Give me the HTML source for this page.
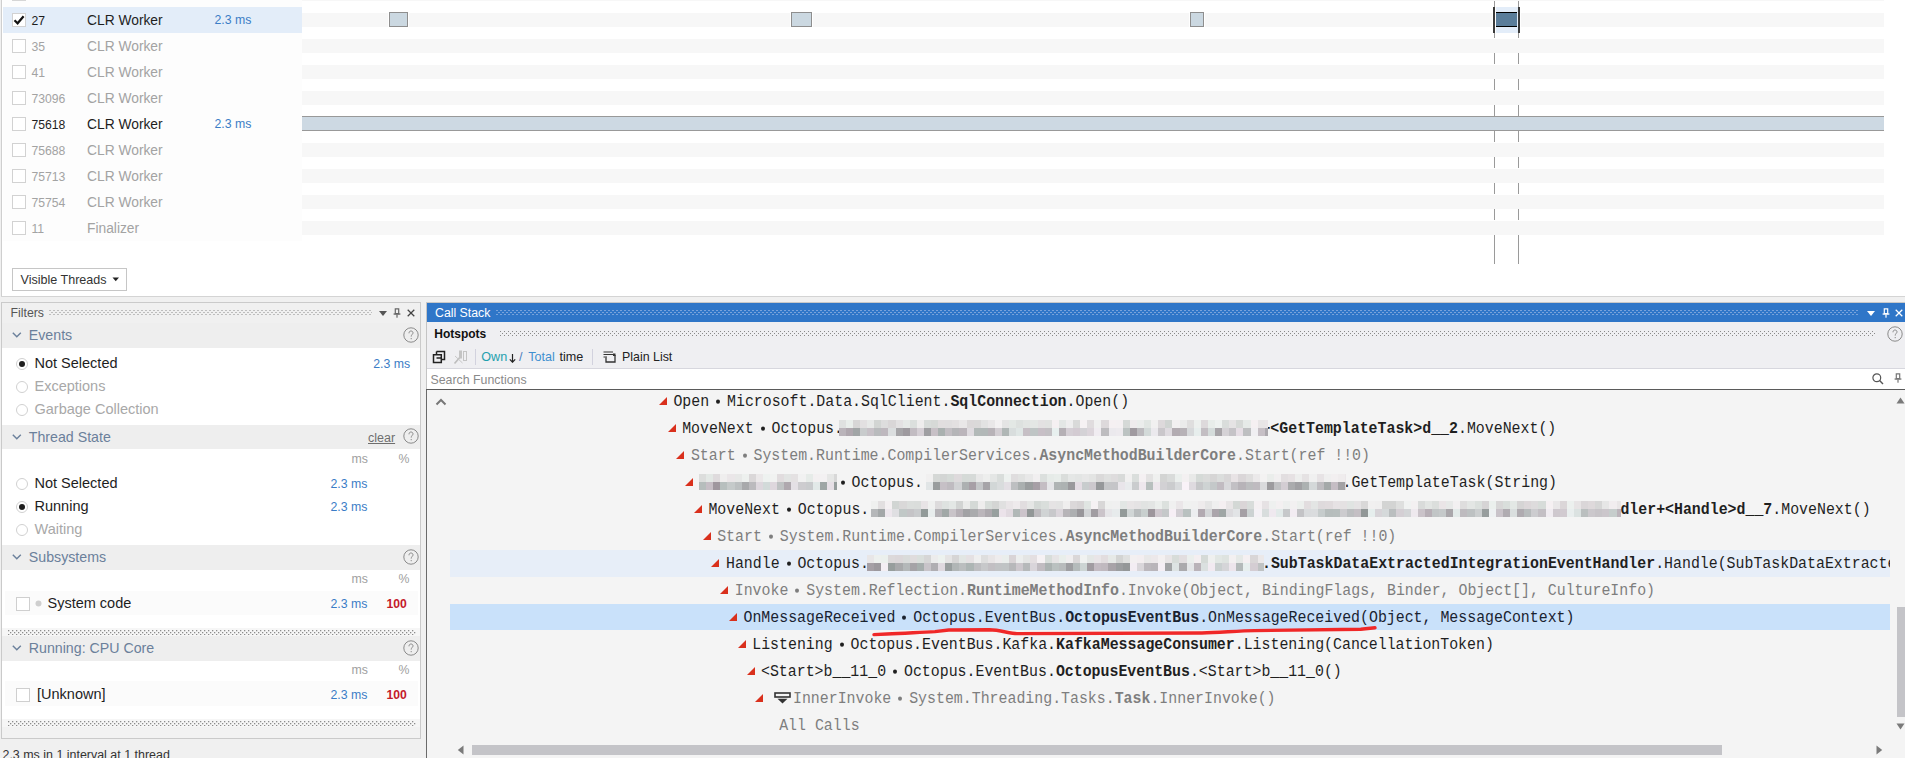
<!DOCTYPE html><html><head><meta charset="utf-8"><style>
html,body{margin:0;padding:0;width:1905px;height:758px;overflow:hidden;position:relative}
body div,body svg{position:absolute}
.t{line-height:0;white-space:pre}
</style></head><body><div style="left:0px;top:0px;width:1905px;height:758px;background:#f0f0f0;"></div>
<div style="left:1px;top:0px;width:1904px;height:296px;background:#ffffff;"></div>
<div style="left:1px;top:0px;width:1px;height:296px;background:#cfcfcf;"></div>
<div style="left:1px;top:296px;width:1904px;height:1px;background:#d4d4d4;"></div>
<div style="left:3px;top:0px;width:299px;height:241px;background:#fdfdfd;"></div>
<div style="left:3px;top:7px;width:299px;height:26px;background:#e3edf9;"></div>
<div style="left:302px;top:-13px;width:1582px;height:14px;background:#f7f7f7;"></div>
<div style="left:302px;top:13px;width:1582px;height:14px;background:#f7f7f7;"></div>
<div style="left:302px;top:39px;width:1582px;height:14px;background:#f7f7f7;"></div>
<div style="left:302px;top:65px;width:1582px;height:14px;background:#f7f7f7;"></div>
<div style="left:302px;top:91px;width:1582px;height:14px;background:#f7f7f7;"></div>
<div style="left:302px;top:117px;width:1582px;height:14px;background:#f7f7f7;"></div>
<div style="left:302px;top:143px;width:1582px;height:14px;background:#f7f7f7;"></div>
<div style="left:302px;top:169px;width:1582px;height:14px;background:#f7f7f7;"></div>
<div style="left:302px;top:195px;width:1582px;height:14px;background:#f7f7f7;"></div>
<div style="left:302px;top:221px;width:1582px;height:14px;background:#f7f7f7;"></div>
<div style="left:12px;top:-13px;width:14px;height:14px;background:#fff;border:1px solid #d6d6d6;box-sizing:border-box"></div>
<div style="left:12px;top:13px;width:14px;height:14px;background:#fff;border:1px solid #d2d2d2;box-sizing:border-box"></div>
<svg style="position:absolute;left:12px;top:13px" width="14" height="14"><path d="M2.5 7.2 L5.6 10.3 L11.6 3.2" fill="none" stroke="#111" stroke-width="2.2"/></svg>
<div class="t" style="left:31.5px;top:20.77px;font-family:'Liberation Sans', sans-serif;font-size:12.2px;color:#1e1e1e;font-weight:400;">27</div>
<div class="t" style="left:87px;top:21.02px;font-family:'Liberation Sans', sans-serif;font-size:13.8px;color:#1e1e1e;font-weight:400;">CLR Worker</div>
<div class="t" style="left:214.5px;top:20.14px;font-family:'Liberation Sans', sans-serif;font-size:12.3px;color:#3b7dc6;font-weight:400;">2.3 ms</div>
<div style="left:12px;top:39px;width:14px;height:14px;background:#fff;border:1px solid #d2d2d2;box-sizing:border-box"></div>
<div class="t" style="left:31.5px;top:46.77px;font-family:'Liberation Sans', sans-serif;font-size:12.2px;color:#a3a3a3;font-weight:400;">35</div>
<div class="t" style="left:87px;top:47.02px;font-family:'Liberation Sans', sans-serif;font-size:13.8px;color:#a3a3a3;font-weight:400;">CLR Worker</div>
<div style="left:12px;top:65px;width:14px;height:14px;background:#fff;border:1px solid #d2d2d2;box-sizing:border-box"></div>
<div class="t" style="left:31.5px;top:72.77px;font-family:'Liberation Sans', sans-serif;font-size:12.2px;color:#a3a3a3;font-weight:400;">41</div>
<div class="t" style="left:87px;top:73.02px;font-family:'Liberation Sans', sans-serif;font-size:13.8px;color:#a3a3a3;font-weight:400;">CLR Worker</div>
<div style="left:12px;top:91px;width:14px;height:14px;background:#fff;border:1px solid #d2d2d2;box-sizing:border-box"></div>
<div class="t" style="left:31.5px;top:98.77px;font-family:'Liberation Sans', sans-serif;font-size:12.2px;color:#a3a3a3;font-weight:400;">73096</div>
<div class="t" style="left:87px;top:99.02px;font-family:'Liberation Sans', sans-serif;font-size:13.8px;color:#a3a3a3;font-weight:400;">CLR Worker</div>
<div style="left:12px;top:117px;width:14px;height:14px;background:#fff;border:1px solid #d2d2d2;box-sizing:border-box"></div>
<div class="t" style="left:31.5px;top:124.77px;font-family:'Liberation Sans', sans-serif;font-size:12.2px;color:#1e1e1e;font-weight:400;">75618</div>
<div class="t" style="left:87px;top:125.02px;font-family:'Liberation Sans', sans-serif;font-size:13.8px;color:#1e1e1e;font-weight:400;">CLR Worker</div>
<div class="t" style="left:214.5px;top:124.14px;font-family:'Liberation Sans', sans-serif;font-size:12.3px;color:#3b7dc6;font-weight:400;">2.3 ms</div>
<div style="left:12px;top:143px;width:14px;height:14px;background:#fff;border:1px solid #d2d2d2;box-sizing:border-box"></div>
<div class="t" style="left:31.5px;top:150.77px;font-family:'Liberation Sans', sans-serif;font-size:12.2px;color:#a3a3a3;font-weight:400;">75688</div>
<div class="t" style="left:87px;top:151.02px;font-family:'Liberation Sans', sans-serif;font-size:13.8px;color:#a3a3a3;font-weight:400;">CLR Worker</div>
<div style="left:12px;top:169px;width:14px;height:14px;background:#fff;border:1px solid #d2d2d2;box-sizing:border-box"></div>
<div class="t" style="left:31.5px;top:176.77px;font-family:'Liberation Sans', sans-serif;font-size:12.2px;color:#a3a3a3;font-weight:400;">75713</div>
<div class="t" style="left:87px;top:177.02px;font-family:'Liberation Sans', sans-serif;font-size:13.8px;color:#a3a3a3;font-weight:400;">CLR Worker</div>
<div style="left:12px;top:195px;width:14px;height:14px;background:#fff;border:1px solid #d2d2d2;box-sizing:border-box"></div>
<div class="t" style="left:31.5px;top:202.77px;font-family:'Liberation Sans', sans-serif;font-size:12.2px;color:#a3a3a3;font-weight:400;">75754</div>
<div class="t" style="left:87px;top:203.02px;font-family:'Liberation Sans', sans-serif;font-size:13.8px;color:#a3a3a3;font-weight:400;">CLR Worker</div>
<div style="left:12px;top:221px;width:14px;height:14px;background:#fff;border:1px solid #d2d2d2;box-sizing:border-box"></div>
<div class="t" style="left:31.5px;top:228.77px;font-family:'Liberation Sans', sans-serif;font-size:12.2px;color:#a3a3a3;font-weight:400;">11</div>
<div class="t" style="left:87px;top:229.02px;font-family:'Liberation Sans', sans-serif;font-size:13.8px;color:#a3a3a3;font-weight:400;">Finalizer</div>
<div style="left:388px;top:12px;width:21px;height:15px;background:#ffffff;"></div>
<div style="left:389px;top:12px;width:19px;height:15px;background:#cbd8e1;border:1px solid #8e8e8e;box-sizing:border-box"></div>
<div style="left:790px;top:12px;width:23px;height:15px;background:#ffffff;"></div>
<div style="left:791px;top:12px;width:21px;height:15px;background:#cbd8e1;border:1px solid #8e8e8e;box-sizing:border-box"></div>
<div style="left:1189px;top:12px;width:16px;height:15px;background:#ffffff;"></div>
<div style="left:1190px;top:12px;width:14px;height:15px;background:#cbd8e1;border:1px solid #8e8e8e;box-sizing:border-box"></div>
<div style="left:1492px;top:12px;width:29px;height:16px;background:#ffffff;"></div>
<div style="left:1496px;top:7px;width:22px;height:26px;background:#e3edf9;"></div>
<div style="left:1496px;top:12px;width:21px;height:15px;background:#5a7d9a;border-top:1px solid #000;border-bottom:1px solid #000;box-sizing:border-box"></div>
<div style="left:1493px;top:7px;width:2px;height:26px;background:#3a3a3a;"></div>
<div style="left:1518px;top:7px;width:2px;height:26px;background:#3a3a3a;"></div>
<div style="left:302px;top:116px;width:1582px;height:15px;background:#cdd9e3;border-top:1px solid #999;border-bottom:1px solid #999;box-sizing:border-box"></div>
<div style="left:1494px;top:1px;width:1px;height:6px;background:#9a9a9a;"></div>
<div style="left:1494px;top:33px;width:1px;height:5px;background:#9a9a9a;"></div>
<div style="left:1494px;top:53px;width:1px;height:11px;background:#9a9a9a;"></div>
<div style="left:1494px;top:79px;width:1px;height:11px;background:#9a9a9a;"></div>
<div style="left:1494px;top:105px;width:1px;height:11px;background:#9a9a9a;"></div>
<div style="left:1494px;top:131px;width:1px;height:11px;background:#9a9a9a;"></div>
<div style="left:1494px;top:157px;width:1px;height:11px;background:#9a9a9a;"></div>
<div style="left:1494px;top:183px;width:1px;height:11px;background:#9a9a9a;"></div>
<div style="left:1494px;top:209px;width:1px;height:11px;background:#9a9a9a;"></div>
<div style="left:1494px;top:235px;width:1px;height:29px;background:#9a9a9a;"></div>
<div style="left:1518px;top:1px;width:1px;height:6px;background:#9a9a9a;"></div>
<div style="left:1518px;top:33px;width:1px;height:5px;background:#9a9a9a;"></div>
<div style="left:1518px;top:53px;width:1px;height:11px;background:#9a9a9a;"></div>
<div style="left:1518px;top:79px;width:1px;height:11px;background:#9a9a9a;"></div>
<div style="left:1518px;top:105px;width:1px;height:11px;background:#9a9a9a;"></div>
<div style="left:1518px;top:131px;width:1px;height:11px;background:#9a9a9a;"></div>
<div style="left:1518px;top:157px;width:1px;height:11px;background:#9a9a9a;"></div>
<div style="left:1518px;top:183px;width:1px;height:11px;background:#9a9a9a;"></div>
<div style="left:1518px;top:209px;width:1px;height:11px;background:#9a9a9a;"></div>
<div style="left:1518px;top:235px;width:1px;height:29px;background:#9a9a9a;"></div>
<div style="left:12px;top:268px;width:115px;height:23px;background:#ffffff;border:1px solid #c6c6c6;box-sizing:border-box"></div>
<div class="t" style="left:20.5px;top:279.65px;font-family:'Liberation Sans', sans-serif;font-size:12.55px;color:#333;font-weight:400;">Visible Threads</div>
<svg style="position:absolute;left:112px;top:277px" width="8" height="5"><path d="M0.5 0.5 L7 0.5 L3.75 4.2 Z" fill="#222"/></svg>
<div style="left:1px;top:302px;width:420px;height:437px;background:#ffffff;border:1px solid #cacaca;box-sizing:border-box"></div>
<div style="left:2px;top:303px;width:418px;height:20px;background:#f0f0f0;"></div>
<div class="t" style="left:10.5px;top:312.54px;font-family:'Liberation Sans', sans-serif;font-size:12.3px;color:#555;font-weight:400;">Filters</div>
<svg style="position:absolute;left:49px;top:310px" width="323" height="5"><defs><pattern id="p1" width="4" height="4" patternUnits="userSpaceOnUse"><rect x="0" y="0" width="2" height="1" fill="#bdbdbd"/><rect x="2" y="2" width="2" height="1" fill="#bdbdbd"/></pattern></defs><rect width="323" height="5" fill="url(#p1)"/></svg>
<svg style="position:absolute;left:379px;top:311px" width="8" height="5"><path d="M0 0 L8 0 L4.0 5 Z" fill="#555"/></svg>
<svg style="position:absolute;left:393px;top:308px" width="8" height="10"><path d="M2.3 0.8 H5.7 V5.6 H2.3 Z" fill="none" stroke="#666" stroke-width="1.2"/><rect x="0.6" y="5.4" width="6.8" height="1.3" fill="#666"/><rect x="3.4" y="6.5" width="1.2" height="3.2" fill="#666"/></svg>
<svg style="position:absolute;left:407px;top:309px" width="8" height="8"><path d="M0.7 0.7 L7.3 7.3 M7.3 0.7 L0.7 7.3" stroke="#444" stroke-width="1.25"/></svg>
<div style="left:2px;top:323px;width:418px;height:25px;background:#eeeeee;"></div>
<svg style="position:absolute;left:12px;top:332px" width="10" height="6"><path d="M0.8 0.8 L4.8 4.8 L8.8 0.8" fill="none" stroke="#6b809b" stroke-width="1.4"/></svg>
<div class="t" style="left:28.8px;top:335.08px;font-family:'Liberation Sans', sans-serif;font-size:14.2px;color:#6b809b;font-weight:400;">Events</div>
<svg style="position:absolute;left:402.5px;top:326.7px" width="16" height="16"><circle cx="8" cy="8" r="7.2" fill="none" stroke="#8a8a8a" stroke-width="1"/><path d="M6 6.3 C6 4.6 7 4 8 4 C9.2 4 10 4.8 10 5.9 C10 7.3 8.2 7.6 8.2 9.6" fill="none" stroke="#8a8a8a" stroke-width="1"/><rect x="7.7" y="11" width="1" height="1.2" fill="#8a8a8a"/></svg>
<svg style="position:absolute;left:16px;top:358px" width="12" height="12"><circle cx="6" cy="6" r="5.5" fill="#fff" stroke="#d0d0d0" stroke-width="1"/><circle cx="6" cy="6" r="3" fill="#1e1e1e"/></svg>
<div class="t" style="left:34.5px;top:362.97px;font-family:'Liberation Sans', sans-serif;font-size:14.5px;color:#1e1e1e;font-weight:400;">Not Selected</div>
<div class="t" style="left:373.2px;top:363.74px;font-family:'Liberation Sans', sans-serif;font-size:12.3px;color:#3b7dc6;font-weight:400;">2.3 ms</div>
<svg style="position:absolute;left:16px;top:380.5px" width="12" height="12"><circle cx="6" cy="6" r="5.5" fill="#fff" stroke="#d0d0d0" stroke-width="1"/></svg>
<div class="t" style="left:34.5px;top:385.97px;font-family:'Liberation Sans', sans-serif;font-size:14.5px;color:#a8a8a8;font-weight:400;">Exceptions</div>
<svg style="position:absolute;left:16px;top:403.5px" width="12" height="12"><circle cx="6" cy="6" r="5.5" fill="#fff" stroke="#d0d0d0" stroke-width="1"/></svg>
<div class="t" style="left:34.5px;top:408.97px;font-family:'Liberation Sans', sans-serif;font-size:14.5px;color:#a8a8a8;font-weight:400;">Garbage Collection</div>
<div style="left:2px;top:425px;width:418px;height:24px;background:#eeeeee;"></div>
<svg style="position:absolute;left:12px;top:434px" width="10" height="6"><path d="M0.8 0.8 L4.8 4.8 L8.8 0.8" fill="none" stroke="#6b809b" stroke-width="1.4"/></svg>
<div class="t" style="left:28.8px;top:437.08px;font-family:'Liberation Sans', sans-serif;font-size:14.2px;color:#6b809b;font-weight:400;">Thread State</div>
<svg style="position:absolute;left:402.5px;top:428.2px" width="16" height="16"><circle cx="8" cy="8" r="7.2" fill="none" stroke="#8a8a8a" stroke-width="1"/><path d="M6 6.3 C6 4.6 7 4 8 4 C9.2 4 10 4.8 10 5.9 C10 7.3 8.2 7.6 8.2 9.6" fill="none" stroke="#8a8a8a" stroke-width="1"/><rect x="7.7" y="11" width="1" height="1.2" fill="#8a8a8a"/></svg>
<div class="t" style="left:368px;top:437.67px;font-family:'Liberation Sans', sans-serif;font-size:12.5px;color:#6e6e6e;font-weight:400;text-decoration:underline">clear</div>
<div class="t" style="left:351.5px;top:458.74px;font-family:'Liberation Sans', sans-serif;font-size:12.3px;color:#a0a0a0;font-weight:400;">ms</div>
<div class="t" style="left:398.5px;top:458.74px;font-family:'Liberation Sans', sans-serif;font-size:12.3px;color:#a0a0a0;font-weight:400;">%</div>
<svg style="position:absolute;left:16px;top:477.5px" width="12" height="12"><circle cx="6" cy="6" r="5.5" fill="#fff" stroke="#d0d0d0" stroke-width="1"/></svg>
<div class="t" style="left:34.5px;top:483.17px;font-family:'Liberation Sans', sans-serif;font-size:14.5px;color:#1e1e1e;font-weight:400;">Not Selected</div>
<div class="t" style="left:330.5px;top:483.94px;font-family:'Liberation Sans', sans-serif;font-size:12.3px;color:#3b7dc6;font-weight:400;">2.3 ms</div>
<svg style="position:absolute;left:16px;top:500.5px" width="12" height="12"><circle cx="6" cy="6" r="5.5" fill="#fff" stroke="#d0d0d0" stroke-width="1"/><circle cx="6" cy="6" r="3" fill="#1e1e1e"/></svg>
<div class="t" style="left:34.5px;top:506.17px;font-family:'Liberation Sans', sans-serif;font-size:14.5px;color:#1e1e1e;font-weight:400;">Running</div>
<div class="t" style="left:330.5px;top:506.94px;font-family:'Liberation Sans', sans-serif;font-size:12.3px;color:#3b7dc6;font-weight:400;">2.3 ms</div>
<svg style="position:absolute;left:16px;top:523.5px" width="12" height="12"><circle cx="6" cy="6" r="5.5" fill="#fff" stroke="#d0d0d0" stroke-width="1"/></svg>
<div class="t" style="left:34.5px;top:529.17px;font-family:'Liberation Sans', sans-serif;font-size:14.5px;color:#a8a8a8;font-weight:400;">Waiting</div>
<div style="left:2px;top:545px;width:418px;height:25px;background:#eeeeee;"></div>
<svg style="position:absolute;left:12px;top:554px" width="10" height="6"><path d="M0.8 0.8 L4.8 4.8 L8.8 0.8" fill="none" stroke="#6b809b" stroke-width="1.4"/></svg>
<div class="t" style="left:28.8px;top:557.08px;font-family:'Liberation Sans', sans-serif;font-size:14.2px;color:#6b809b;font-weight:400;">Subsystems</div>
<svg style="position:absolute;left:402.5px;top:548.7px" width="16" height="16"><circle cx="8" cy="8" r="7.2" fill="none" stroke="#8a8a8a" stroke-width="1"/><path d="M6 6.3 C6 4.6 7 4 8 4 C9.2 4 10 4.8 10 5.9 C10 7.3 8.2 7.6 8.2 9.6" fill="none" stroke="#8a8a8a" stroke-width="1"/><rect x="7.7" y="11" width="1" height="1.2" fill="#8a8a8a"/></svg>
<div class="t" style="left:351.5px;top:578.74px;font-family:'Liberation Sans', sans-serif;font-size:12.3px;color:#a0a0a0;font-weight:400;">ms</div>
<div class="t" style="left:398.5px;top:578.74px;font-family:'Liberation Sans', sans-serif;font-size:12.3px;color:#a0a0a0;font-weight:400;">%</div>
<div style="left:5px;top:591px;width:413px;height:24px;background:#fbfbfb;"></div>
<div style="left:16px;top:597px;width:14px;height:14px;background:#fff;border:1px solid #cfcfcf;box-sizing:border-box"></div>
<svg style="position:absolute;left:35px;top:600px" width="7" height="7"><circle cx="3.5" cy="3.5" r="3" fill="#cfcfcf"/></svg>
<div class="t" style="left:47.5px;top:603.17px;font-family:'Liberation Sans', sans-serif;font-size:14.5px;color:#1e1e1e;font-weight:400;">System code</div>
<div class="t" style="left:330.5px;top:603.94px;font-family:'Liberation Sans', sans-serif;font-size:12.3px;color:#3b7dc6;font-weight:400;">2.3 ms</div>
<div class="t" style="left:386.5px;top:603.97px;font-family:'Liberation Sans', sans-serif;font-size:12.2px;color:#c41a2b;font-weight:700;">100</div>
<div style="left:2px;top:628px;width:418px;height:8px;background:#f6f6f6;"></div>
<svg style="position:absolute;left:8px;top:630px" width="408" height="5"><defs><pattern id="p2" width="4" height="4" patternUnits="userSpaceOnUse"><rect x="0" y="0" width="1.3" height="1.3" fill="#8c8c8c"/><rect x="2" y="2" width="1.3" height="1.3" fill="#8c8c8c"/></pattern></defs><rect width="408" height="5" fill="url(#p2)"/></svg>
<div style="left:2px;top:636px;width:418px;height:25px;background:#eeeeee;"></div>
<svg style="position:absolute;left:12px;top:645px" width="10" height="6"><path d="M0.8 0.8 L4.8 4.8 L8.8 0.8" fill="none" stroke="#6b809b" stroke-width="1.4"/></svg>
<div class="t" style="left:28.8px;top:648.08px;font-family:'Liberation Sans', sans-serif;font-size:14.2px;color:#6b809b;font-weight:400;">Running: CPU Core</div>
<svg style="position:absolute;left:402.5px;top:639.7px" width="16" height="16"><circle cx="8" cy="8" r="7.2" fill="none" stroke="#8a8a8a" stroke-width="1"/><path d="M6 6.3 C6 4.6 7 4 8 4 C9.2 4 10 4.8 10 5.9 C10 7.3 8.2 7.6 8.2 9.6" fill="none" stroke="#8a8a8a" stroke-width="1"/><rect x="7.7" y="11" width="1" height="1.2" fill="#8a8a8a"/></svg>
<div class="t" style="left:351.5px;top:669.74px;font-family:'Liberation Sans', sans-serif;font-size:12.3px;color:#a0a0a0;font-weight:400;">ms</div>
<div class="t" style="left:398.5px;top:669.74px;font-family:'Liberation Sans', sans-serif;font-size:12.3px;color:#a0a0a0;font-weight:400;">%</div>
<div style="left:5px;top:681px;width:413px;height:25px;background:#fbfbfb;"></div>
<div style="left:16px;top:688px;width:14px;height:14px;background:#fff;border:1px solid #cfcfcf;box-sizing:border-box"></div>
<div class="t" style="left:37px;top:693.77px;font-family:'Liberation Sans', sans-serif;font-size:14.5px;color:#1e1e1e;font-weight:400;">[Unknown]</div>
<div class="t" style="left:330.5px;top:694.54px;font-family:'Liberation Sans', sans-serif;font-size:12.3px;color:#3b7dc6;font-weight:400;">2.3 ms</div>
<div class="t" style="left:386.5px;top:694.57px;font-family:'Liberation Sans', sans-serif;font-size:12.2px;color:#c41a2b;font-weight:700;">100</div>
<div style="left:2px;top:719px;width:418px;height:8px;background:#f6f6f6;"></div>
<svg style="position:absolute;left:8px;top:721px" width="408" height="5"><defs><pattern id="p3" width="4" height="4" patternUnits="userSpaceOnUse"><rect x="0" y="0" width="1.3" height="1.3" fill="#8c8c8c"/><rect x="2" y="2" width="1.3" height="1.3" fill="#8c8c8c"/></pattern></defs><rect width="408" height="5" fill="url(#p3)"/></svg>
<div style="left:2px;top:727px;width:418px;height:11px;background:#f2f2f2;"></div>
<div class="t" style="left:2.5px;top:755.18px;font-family:'Liberation Sans', sans-serif;font-size:12.45px;color:#333;font-weight:400;">2.3 ms in 1 interval at 1 thread</div>
<div style="left:426px;top:302px;width:1479px;height:456px;background:#f4f4f4;border-left:1px solid #c4c4c4;box-sizing:border-box"></div>
<div style="left:426px;top:389px;width:1px;height:369px;background:#6a6a6a;"></div>
<div style="left:426px;top:302px;width:1479px;height:1px;background:#c8c8c8;"></div>
<div style="left:427px;top:303px;width:1478px;height:19px;background:#2f76c8;"></div>
<div class="t" style="left:435px;top:313.24px;font-family:'Liberation Sans', sans-serif;font-size:12.3px;color:#ffffff;font-weight:400;">Call Stack</div>
<svg style="position:absolute;left:496px;top:310px" width="1362" height="5"><defs><pattern id="p4" width="4" height="4" patternUnits="userSpaceOnUse"><rect x="0" y="0" width="2" height="1" fill="#78a3db"/><rect x="2" y="2" width="2" height="1" fill="#78a3db"/></pattern></defs><rect width="1362" height="5" fill="url(#p4)"/></svg>
<svg style="position:absolute;left:1867px;top:311px" width="8" height="5"><path d="M0 0 L8 0 L4.0 5 Z" fill="#ffffff"/></svg>
<svg style="position:absolute;left:1882px;top:308px" width="8" height="10"><path d="M2.3 0.8 H5.7 V5.6 H2.3 Z" fill="none" stroke="#ffffff" stroke-width="1.2"/><rect x="0.6" y="5.4" width="6.8" height="1.3" fill="#ffffff"/><rect x="3.4" y="6.5" width="1.2" height="3.2" fill="#ffffff"/></svg>
<svg style="position:absolute;left:1895px;top:309px" width="8" height="8"><path d="M0.7 0.7 L7.3 7.3 M7.3 0.7 L0.7 7.3" stroke="#ffffff" stroke-width="1.25"/></svg>
<div style="left:427px;top:322px;width:1478px;height:46px;background:#efeff2;"></div>
<div class="t" style="left:434.3px;top:333.84px;font-family:'Liberation Sans', sans-serif;font-size:12.0px;color:#111;font-weight:700;">Hotspots</div>
<svg style="position:absolute;left:500px;top:331px" width="1375" height="5"><defs><pattern id="p5" width="4" height="4" patternUnits="userSpaceOnUse"><rect x="0" y="0" width="1" height="1" fill="#8a8a8a"/><rect x="2" y="2" width="1" height="1" fill="#8a8a8a"/></pattern></defs><rect width="1375" height="5" fill="url(#p5)"/></svg>
<svg style="position:absolute;left:1886.5px;top:326px" width="16" height="16"><circle cx="8" cy="8" r="7.2" fill="none" stroke="#8a8a8a" stroke-width="1"/><path d="M6 6.3 C6 4.6 7 4 8 4 C9.2 4 10 4.8 10 5.9 C10 7.3 8.2 7.6 8.2 9.6" fill="none" stroke="#8a8a8a" stroke-width="1"/><rect x="7.7" y="11" width="1" height="1.2" fill="#8a8a8a"/></svg>
<div style="left:427px;top:368px;width:1478px;height:1px;background:#d7d7de;"></div>
<div style="left:427px;top:369px;width:1478px;height:20px;background:#ffffff;"></div>
<div class="t" style="left:430.5px;top:379.82px;font-family:'Liberation Sans', sans-serif;font-size:12.35px;color:#8a8a8a;font-weight:400;">Search Functions</div>
<svg style="position:absolute;left:1872px;top:373px" width="12" height="12"><circle cx="4.8" cy="4.8" r="3.9" fill="none" stroke="#555" stroke-width="1.2"/><path d="M7.6 7.6 L11 11" stroke="#555" stroke-width="1.4"/></svg>
<svg style="position:absolute;left:1894px;top:373px" width="8" height="10"><path d="M2.3 0.8 H5.7 V5.6 H2.3 Z" fill="none" stroke="#777" stroke-width="1.2"/><rect x="0.6" y="5.4" width="6.8" height="1.3" fill="#777"/><rect x="3.4" y="6.5" width="1.2" height="3.2" fill="#777"/></svg>
<div style="left:426px;top:389px;width:1479px;height:1px;background:#5a5a5a;"></div>
<svg style="position:absolute;left:432px;top:350px" width="14" height="14"><path d="M4.5 1.5 H12.5 V9.5 H10" fill="none" stroke="#222" stroke-width="1.5"/><path d="M1.5 4.8 H9.3 V12.5 H1.5 Z" fill="none" stroke="#222" stroke-width="1.5"/><path d="M4.5 1.5 V4" fill="none" stroke="#222" stroke-width="1.5"/><path d="M4.5 8 H9" stroke="#222" stroke-width="1.5"/></svg>
<svg style="position:absolute;left:453px;top:349px" width="16" height="16"><path d="M1.5 14.5 L8.5 6.5" stroke="#bdbdbd" stroke-width="1.6"/><path d="M2 7 L9.5 14" stroke="#c8c8c8" stroke-width="1"/><rect x="6" y="1.5" width="3" height="8" fill="#c4c4c4"/><rect x="10.5" y="2.5" width="3" height="9" fill="none" stroke="#c4c4c4" stroke-width="1"/></svg>
<div style="left:475px;top:349px;width:1px;height:16px;background:#d2d2de;"></div>
<div class="t" style="left:481.3px;top:357.23px;font-family:'Liberation Sans', sans-serif;font-size:12.6px;color:#1fa0ae;font-weight:400;">Own</div>
<svg style="position:absolute;left:509px;top:354px" width="7" height="9"><path d="M3.5 0 V8 M0.8 5.3 L3.5 8.2 L6.2 5.3" fill="none" stroke="#222" stroke-width="1.2"/></svg>
<div class="t" style="left:519px;top:357.23px;font-family:'Liberation Sans', sans-serif;font-size:12.6px;color:#4c7fbf;font-weight:400;">/</div>
<div class="t" style="left:528.2px;top:357.23px;font-family:'Liberation Sans', sans-serif;font-size:12.6px;color:#3f8fd0;font-weight:400;">Total</div>
<div class="t" style="left:559.5px;top:357.23px;font-family:'Liberation Sans', sans-serif;font-size:12.6px;color:#222;font-weight:400;">time</div>
<div style="left:592px;top:349px;width:1px;height:16px;background:#d2d2de;"></div>
<svg style="position:absolute;left:603px;top:351px" width="13" height="12"><path d="M0.5 1 H10 M0.5 3.5 H10 M0.5 6 H4" stroke="#333" stroke-width="1.2"/><path d="M3 6.5 V11 H12 V4" fill="none" stroke="#333" stroke-width="1.3"/><rect x="10" y="2.5" width="2.5" height="2.5" fill="#333"/></svg>
<div class="t" style="left:622px;top:357.30px;font-family:'Liberation Sans', sans-serif;font-size:12.4px;color:#222;font-weight:400;">Plain List</div>
<div style="left:450px;top:550px;width:1440px;height:26.5px;background:#e7eef8;"></div>
<div style="left:450px;top:604px;width:1440px;height:26.3px;background:#c9e1fa;"></div>
<svg style="position:absolute;left:435px;top:397px" width="12" height="9"><path d="M1.5 7.5 L6 3 L10.5 7.5" fill="none" stroke="#777" stroke-width="2"/></svg>
<svg style="position:absolute;left:658.90px;top:397px" width="8" height="8"><path d="M8 0 L8 8 L0 8 Z" fill="#d9301c"/></svg>
<div class="t" style="left:673.4px;top:401.83px;font-family:'Liberation Mono', monospace;font-size:14.9px;color:#1f1f1f;font-weight:400;letter-spacing:-0.001px;transform:scaleY(1.1);transform-origin:0 3.97px">Open<span style="display:inline-block;width:17.88px;position:relative"><span style="position:absolute;left:6.9399999999999995px;top:-6px;width:4px;height:4px;border-radius:2px;background:#1f1f1f"></span></span>Microsoft.Data.SqlClient.<b>SqlConnection</b>.Open()</div>
<svg style="position:absolute;left:667.66px;top:424px" width="8" height="8"><path d="M8 0 L8 8 L0 8 Z" fill="#d9301c"/></svg>
<div class="t" style="left:682.16px;top:428.83px;font-family:'Liberation Mono', monospace;font-size:14.9px;color:#1f1f1f;font-weight:400;letter-spacing:-0.001px;transform:scaleY(1.1);transform-origin:0 3.97px">MoveNext<span style="display:inline-block;width:17.88px;position:relative"><span style="position:absolute;left:6.9399999999999995px;top:-6px;width:4px;height:4px;border-radius:2px;background:#1f1f1f"></span></span>Octopus.</div>
<div class="t" style="left:1261.4px;top:428.83px;font-family:'Liberation Mono', monospace;font-size:14.9px;color:#1f1f1f;font-weight:400;letter-spacing:-0.001px;transform:scaleY(1.1);transform-origin:0 3.97px"><b>+&lt;GetTemplateTask&gt;d__2</b>.MoveNext()</div>
<div style="left:838.7px;top:420px;width:7.3999999999999995px;height:8px;background:rgb(223,225,224);"></div>
<div style="left:838.7px;top:428px;width:7.3999999999999995px;height:8px;background:rgb(186,180,186);"></div>
<div style="left:845.8px;top:420px;width:7.3999999999999995px;height:8px;background:rgb(233,238,235);"></div>
<div style="left:845.8px;top:428px;width:7.3999999999999995px;height:8px;background:rgb(175,167,174);"></div>
<div style="left:852.9px;top:420px;width:7.3999999999999995px;height:8px;background:rgb(215,214,214);"></div>
<div style="left:852.9px;top:428px;width:7.3999999999999995px;height:8px;background:rgb(161,165,166);"></div>
<div style="left:860.0px;top:420px;width:7.3999999999999995px;height:8px;background:rgb(226,224,225);"></div>
<div style="left:860.0px;top:428px;width:7.3999999999999995px;height:8px;background:rgb(200,203,204);"></div>
<div style="left:867.1px;top:420px;width:7.3999999999999995px;height:8px;background:rgb(231,233,232);"></div>
<div style="left:867.1px;top:428px;width:7.3999999999999995px;height:8px;background:rgb(199,193,199);"></div>
<div style="left:874.2px;top:420px;width:7.3999999999999995px;height:8px;background:rgb(210,213,211);"></div>
<div style="left:874.2px;top:428px;width:7.3999999999999995px;height:8px;background:rgb(185,187,189);"></div>
<div style="left:881.3px;top:420px;width:7.3999999999999995px;height:8px;background:rgb(221,221,221);"></div>
<div style="left:881.3px;top:428px;width:7.3999999999999995px;height:8px;background:rgb(190,184,190);"></div>
<div style="left:888.4px;top:420px;width:7.3999999999999995px;height:8px;background:rgb(217,214,215);"></div>
<div style="left:888.4px;top:428px;width:7.3999999999999995px;height:8px;background:rgb(219,222,223);"></div>
<div style="left:895.5px;top:420px;width:7.3999999999999995px;height:8px;background:rgb(227,225,226);"></div>
<div style="left:895.5px;top:428px;width:7.3999999999999995px;height:8px;background:rgb(166,165,168);"></div>
<div style="left:902.6px;top:420px;width:7.3999999999999995px;height:8px;background:rgb(230,233,231);"></div>
<div style="left:902.6px;top:428px;width:7.3999999999999995px;height:8px;background:rgb(158,154,159);"></div>
<div style="left:909.7px;top:420px;width:7.3999999999999995px;height:8px;background:rgb(219,223,221);"></div>
<div style="left:909.7px;top:428px;width:7.3999999999999995px;height:8px;background:rgb(194,188,194);"></div>
<div style="left:916.8px;top:420px;width:7.3999999999999995px;height:8px;background:rgb(238,237,237);"></div>
<div style="left:916.8px;top:428px;width:7.3999999999999995px;height:8px;background:rgb(213,207,213);"></div>
<div style="left:923.9px;top:420px;width:7.3999999999999995px;height:8px;background:rgb(216,220,218);"></div>
<div style="left:923.9px;top:428px;width:7.3999999999999995px;height:8px;background:rgb(159,159,162);"></div>
<div style="left:931.0px;top:420px;width:7.3999999999999995px;height:8px;background:rgb(214,217,215);"></div>
<div style="left:931.0px;top:428px;width:7.3999999999999995px;height:8px;background:rgb(199,192,198);"></div>
<div style="left:938.1px;top:420px;width:7.3999999999999995px;height:8px;background:rgb(225,222,223);"></div>
<div style="left:938.1px;top:428px;width:7.3999999999999995px;height:8px;background:rgb(170,177,176);"></div>
<div style="left:945.2px;top:420px;width:7.3999999999999995px;height:8px;background:rgb(224,222,223);"></div>
<div style="left:945.2px;top:428px;width:7.3999999999999995px;height:8px;background:rgb(194,190,195);"></div>
<div style="left:952.3px;top:420px;width:7.3999999999999995px;height:8px;background:rgb(227,224,225);"></div>
<div style="left:952.3px;top:428px;width:7.3999999999999995px;height:8px;background:rgb(181,181,184);"></div>
<div style="left:959.4px;top:420px;width:7.3999999999999995px;height:8px;background:rgb(233,231,232);"></div>
<div style="left:959.4px;top:428px;width:7.3999999999999995px;height:8px;background:rgb(187,181,187);"></div>
<div style="left:966.5px;top:420px;width:7.3999999999999995px;height:8px;background:rgb(219,216,217);"></div>
<div style="left:966.5px;top:428px;width:7.3999999999999995px;height:8px;background:rgb(223,219,224);"></div>
<div style="left:973.6px;top:420px;width:7.3999999999999995px;height:8px;background:rgb(218,217,217);"></div>
<div style="left:973.6px;top:428px;width:7.3999999999999995px;height:8px;background:rgb(178,185,184);"></div>
<div style="left:980.7px;top:420px;width:7.3999999999999995px;height:8px;background:rgb(226,226,226);"></div>
<div style="left:980.7px;top:428px;width:7.3999999999999995px;height:8px;background:rgb(178,184,184);"></div>
<div style="left:987.8px;top:420px;width:7.3999999999999995px;height:8px;background:rgb(233,231,232);"></div>
<div style="left:987.8px;top:428px;width:7.3999999999999995px;height:8px;background:rgb(184,179,184);"></div>
<div style="left:994.9px;top:420px;width:7.3999999999999995px;height:8px;background:rgb(243,241,242);"></div>
<div style="left:994.9px;top:428px;width:7.3999999999999995px;height:8px;background:rgb(211,206,211);"></div>
<div style="left:1002.0px;top:420px;width:7.3999999999999995px;height:8px;background:rgb(228,228,228);"></div>
<div style="left:1002.0px;top:428px;width:7.3999999999999995px;height:8px;background:rgb(176,183,182);"></div>
<div style="left:1009.1px;top:420px;width:7.3999999999999995px;height:8px;background:rgb(227,232,229);"></div>
<div style="left:1009.1px;top:428px;width:7.3999999999999995px;height:8px;background:rgb(216,221,221);"></div>
<div style="left:1016.2px;top:420px;width:7.3999999999999995px;height:8px;background:rgb(221,225,223);"></div>
<div style="left:1016.2px;top:428px;width:7.3999999999999995px;height:8px;background:rgb(223,230,229);"></div>
<div style="left:1023.3px;top:420px;width:7.3999999999999995px;height:8px;background:rgb(226,229,227);"></div>
<div style="left:1023.3px;top:428px;width:7.3999999999999995px;height:8px;background:rgb(198,191,197);"></div>
<div style="left:1030.4px;top:420px;width:7.3999999999999995px;height:8px;background:rgb(228,231,229);"></div>
<div style="left:1030.4px;top:428px;width:7.3999999999999995px;height:8px;background:rgb(191,197,197);"></div>
<div style="left:1037.5px;top:420px;width:7.3999999999999995px;height:8px;background:rgb(227,225,226);"></div>
<div style="left:1037.5px;top:428px;width:7.3999999999999995px;height:8px;background:rgb(199,191,198);"></div>
<div style="left:1044.6px;top:420px;width:7.3999999999999995px;height:8px;background:rgb(225,226,225);"></div>
<div style="left:1044.6px;top:428px;width:7.3999999999999995px;height:8px;background:rgb(195,192,196);"></div>
<div style="left:1051.7px;top:420px;width:7.3999999999999995px;height:8px;background:rgb(245,240,242);"></div>
<div style="left:1051.7px;top:428px;width:7.3999999999999995px;height:8px;background:rgb(232,240,239);"></div>
<div style="left:1058.8px;top:420px;width:7.3999999999999995px;height:8px;background:rgb(227,231,229);"></div>
<div style="left:1058.8px;top:428px;width:7.3999999999999995px;height:8px;background:rgb(181,176,181);"></div>
<div style="left:1065.9px;top:420px;width:7.3999999999999995px;height:8px;background:rgb(238,238,238);"></div>
<div style="left:1065.9px;top:428px;width:7.3999999999999995px;height:8px;background:rgb(213,207,213);"></div>
<div style="left:1073.0px;top:420px;width:7.3999999999999995px;height:8px;background:rgb(217,218,217);"></div>
<div style="left:1073.0px;top:428px;width:7.3999999999999995px;height:8px;background:rgb(211,203,210);"></div>
<div style="left:1080.1px;top:420px;width:7.3999999999999995px;height:8px;background:rgb(246,241,243);"></div>
<div style="left:1080.1px;top:428px;width:7.3999999999999995px;height:8px;background:rgb(212,210,214);"></div>
<div style="left:1087.2px;top:420px;width:7.3999999999999995px;height:8px;background:rgb(224,220,222);"></div>
<div style="left:1087.2px;top:428px;width:7.3999999999999995px;height:8px;background:rgb(220,213,219);"></div>
<div style="left:1094.3px;top:420px;width:7.3999999999999995px;height:8px;background:rgb(240,240,240);"></div>
<div style="left:1094.3px;top:428px;width:7.3999999999999995px;height:8px;background:rgb(240,236,241);"></div>
<div style="left:1101.4px;top:420px;width:7.3999999999999995px;height:8px;background:rgb(221,217,219);"></div>
<div style="left:1101.4px;top:428px;width:7.3999999999999995px;height:8px;background:rgb(189,188,191);"></div>
<div style="left:1108.5px;top:420px;width:7.3999999999999995px;height:8px;background:rgb(245,240,242);"></div>
<div style="left:1108.5px;top:428px;width:7.3999999999999995px;height:8px;background:rgb(235,233,237);"></div>
<div style="left:1115.6px;top:420px;width:7.3999999999999995px;height:8px;background:rgb(244,240,242);"></div>
<div style="left:1115.6px;top:428px;width:7.3999999999999995px;height:8px;background:rgb(237,234,238);"></div>
<div style="left:1122.7px;top:420px;width:7.3999999999999995px;height:8px;background:rgb(213,217,215);"></div>
<div style="left:1122.7px;top:428px;width:7.3999999999999995px;height:8px;background:rgb(188,195,194);"></div>
<div style="left:1129.8px;top:420px;width:7.3999999999999995px;height:8px;background:rgb(239,235,237);"></div>
<div style="left:1129.8px;top:428px;width:7.3999999999999995px;height:8px;background:rgb(160,154,160);"></div>
<div style="left:1136.9px;top:420px;width:7.3999999999999995px;height:8px;background:rgb(235,237,236);"></div>
<div style="left:1136.9px;top:428px;width:7.3999999999999995px;height:8px;background:rgb(188,186,190);"></div>
<div style="left:1144.0px;top:420px;width:7.3999999999999995px;height:8px;background:rgb(225,230,227);"></div>
<div style="left:1144.0px;top:428px;width:7.3999999999999995px;height:8px;background:rgb(211,218,217);"></div>
<div style="left:1151.1px;top:420px;width:7.3999999999999995px;height:8px;background:rgb(241,240,240);"></div>
<div style="left:1151.1px;top:428px;width:7.3999999999999995px;height:8px;background:rgb(235,233,237);"></div>
<div style="left:1158.2px;top:420px;width:7.3999999999999995px;height:8px;background:rgb(221,217,219);"></div>
<div style="left:1158.2px;top:428px;width:7.3999999999999995px;height:8px;background:rgb(202,199,203);"></div>
<div style="left:1165.3px;top:420px;width:7.3999999999999995px;height:8px;background:rgb(208,212,210);"></div>
<div style="left:1165.3px;top:428px;width:7.3999999999999995px;height:8px;background:rgb(223,219,224);"></div>
<div style="left:1172.4px;top:420px;width:7.3999999999999995px;height:8px;background:rgb(242,240,241);"></div>
<div style="left:1172.4px;top:428px;width:7.3999999999999995px;height:8px;background:rgb(179,172,178);"></div>
<div style="left:1179.5px;top:420px;width:7.3999999999999995px;height:8px;background:rgb(235,235,235);"></div>
<div style="left:1179.5px;top:428px;width:7.3999999999999995px;height:8px;background:rgb(183,178,183);"></div>
<div style="left:1186.6px;top:420px;width:7.3999999999999995px;height:8px;background:rgb(223,222,222);"></div>
<div style="left:1186.6px;top:428px;width:7.3999999999999995px;height:8px;background:rgb(215,217,219);"></div>
<div style="left:1193.7px;top:420px;width:7.3999999999999995px;height:8px;background:rgb(237,240,238);"></div>
<div style="left:1193.7px;top:428px;width:7.3999999999999995px;height:8px;background:rgb(231,238,237);"></div>
<div style="left:1200.8px;top:420px;width:7.3999999999999995px;height:8px;background:rgb(221,217,219);"></div>
<div style="left:1200.8px;top:428px;width:7.3999999999999995px;height:8px;background:rgb(195,190,195);"></div>
<div style="left:1207.9px;top:420px;width:7.3999999999999995px;height:8px;background:rgb(232,237,234);"></div>
<div style="left:1207.9px;top:428px;width:7.3999999999999995px;height:8px;background:rgb(213,220,219);"></div>
<div style="left:1215.0px;top:420px;width:7.3999999999999995px;height:8px;background:rgb(238,242,240);"></div>
<div style="left:1215.0px;top:428px;width:7.3999999999999995px;height:8px;background:rgb(167,164,168);"></div>
<div style="left:1222.1px;top:420px;width:7.3999999999999995px;height:8px;background:rgb(217,221,219);"></div>
<div style="left:1222.1px;top:428px;width:7.3999999999999995px;height:8px;background:rgb(213,210,214);"></div>
<div style="left:1229.2px;top:420px;width:7.3999999999999995px;height:8px;background:rgb(229,227,228);"></div>
<div style="left:1229.2px;top:428px;width:7.3999999999999995px;height:8px;background:rgb(197,195,199);"></div>
<div style="left:1236.3px;top:420px;width:7.3999999999999995px;height:8px;background:rgb(214,217,215);"></div>
<div style="left:1236.3px;top:428px;width:7.3999999999999995px;height:8px;background:rgb(230,222,229);"></div>
<div style="left:1243.4px;top:420px;width:7.3999999999999995px;height:8px;background:rgb(230,234,232);"></div>
<div style="left:1243.4px;top:428px;width:7.3999999999999995px;height:8px;background:rgb(190,191,193);"></div>
<div style="left:1250.5px;top:420px;width:7.3999999999999995px;height:8px;background:rgb(245,240,242);"></div>
<div style="left:1250.5px;top:428px;width:7.3999999999999995px;height:8px;background:rgb(240,239,242);"></div>
<div style="left:1257.6px;top:420px;width:7.3999999999999995px;height:8px;background:rgb(232,229,230);"></div>
<div style="left:1257.6px;top:428px;width:7.3999999999999995px;height:8px;background:rgb(198,191,197);"></div>
<div style="left:1264.7px;top:420px;width:3.3px;height:8px;background:rgb(234,229,231);"></div>
<div style="left:1264.7px;top:428px;width:3.3px;height:8px;background:rgb(172,168,173);"></div>
<svg style="position:absolute;left:676.42px;top:451px" width="8" height="8"><path d="M8 0 L8 8 L0 8 Z" fill="#d9301c"/></svg>
<div class="t" style="left:690.92px;top:455.83px;font-family:'Liberation Mono', monospace;font-size:14.9px;color:#7e7e7e;font-weight:400;letter-spacing:-0.001px;transform:scaleY(1.1);transform-origin:0 3.97px">Start<span style="display:inline-block;width:17.88px;position:relative"><span style="position:absolute;left:6.9399999999999995px;top:-6px;width:4px;height:4px;border-radius:2px;background:#7e7e7e"></span></span>System.Runtime.CompilerServices.<b>AsyncMethodBuilderCore</b>.Start(ref !!0)</div>
<svg style="position:absolute;left:685.18px;top:478px" width="8" height="8"><path d="M8 0 L8 8 L0 8 Z" fill="#d9301c"/></svg>
<div class="t" style="left:699.68px;top:482.83px;font-family:'Liberation Mono', monospace;font-size:14.9px;color:#1f1f1f;font-weight:400;letter-spacing:-0.001px;transform:scaleY(1.1);transform-origin:0 3.97px">               <span style="display:inline-block;width:17.88px;position:relative"><span style="position:absolute;left:6.9399999999999995px;top:-6px;width:4px;height:4px;border-radius:2px;background:#1f1f1f"></span></span>Octopus.</div>
<div class="t" style="left:1342.5px;top:482.83px;font-family:'Liberation Mono', monospace;font-size:14.9px;color:#1f1f1f;font-weight:400;letter-spacing:-0.001px;transform:scaleY(1.1);transform-origin:0 3.97px">.GetTemplateTask(String)</div>
<div style="left:699px;top:474px;width:7.3999999999999995px;height:8px;background:rgb(220,221,220);"></div>
<div style="left:699px;top:482px;width:7.3999999999999995px;height:8px;background:rgb(182,189,188);"></div>
<div style="left:706.1px;top:474px;width:7.3999999999999995px;height:8px;background:rgb(227,232,229);"></div>
<div style="left:706.1px;top:482px;width:7.3999999999999995px;height:8px;background:rgb(198,190,197);"></div>
<div style="left:713.2px;top:474px;width:7.3999999999999995px;height:8px;background:rgb(223,219,221);"></div>
<div style="left:713.2px;top:482px;width:7.3999999999999995px;height:8px;background:rgb(159,151,158);"></div>
<div style="left:720.3px;top:474px;width:7.3999999999999995px;height:8px;background:rgb(239,238,238);"></div>
<div style="left:720.3px;top:482px;width:7.3999999999999995px;height:8px;background:rgb(183,191,190);"></div>
<div style="left:727.4px;top:474px;width:7.3999999999999995px;height:8px;background:rgb(234,230,232);"></div>
<div style="left:727.4px;top:482px;width:7.3999999999999995px;height:8px;background:rgb(197,202,202);"></div>
<div style="left:734.5px;top:474px;width:7.3999999999999995px;height:8px;background:rgb(231,232,231);"></div>
<div style="left:734.5px;top:482px;width:7.3999999999999995px;height:8px;background:rgb(188,192,193);"></div>
<div style="left:741.6px;top:474px;width:7.3999999999999995px;height:8px;background:rgb(237,240,238);"></div>
<div style="left:741.6px;top:482px;width:7.3999999999999995px;height:8px;background:rgb(168,169,171);"></div>
<div style="left:748.7px;top:474px;width:7.3999999999999995px;height:8px;background:rgb(218,215,216);"></div>
<div style="left:748.7px;top:482px;width:7.3999999999999995px;height:8px;background:rgb(187,186,189);"></div>
<div style="left:755.8px;top:474px;width:7.3999999999999995px;height:8px;background:rgb(235,232,233);"></div>
<div style="left:755.8px;top:482px;width:7.3999999999999995px;height:8px;background:rgb(221,215,221);"></div>
<div style="left:762.9px;top:474px;width:7.3999999999999995px;height:8px;background:rgb(238,242,240);"></div>
<div style="left:762.9px;top:482px;width:7.3999999999999995px;height:8px;background:rgb(210,218,217);"></div>
<div style="left:770.0px;top:474px;width:7.3999999999999995px;height:8px;background:rgb(241,242,241);"></div>
<div style="left:770.0px;top:482px;width:7.3999999999999995px;height:8px;background:rgb(222,215,221);"></div>
<div style="left:777.1px;top:474px;width:7.3999999999999995px;height:8px;background:rgb(225,220,222);"></div>
<div style="left:777.1px;top:482px;width:7.3999999999999995px;height:8px;background:rgb(191,194,195);"></div>
<div style="left:784.2px;top:474px;width:7.3999999999999995px;height:8px;background:rgb(226,228,227);"></div>
<div style="left:784.2px;top:482px;width:7.3999999999999995px;height:8px;background:rgb(175,168,174);"></div>
<div style="left:791.3px;top:474px;width:7.3999999999999995px;height:8px;background:rgb(228,225,226);"></div>
<div style="left:791.3px;top:482px;width:7.3999999999999995px;height:8px;background:rgb(228,224,229);"></div>
<div style="left:798.4px;top:474px;width:7.3999999999999995px;height:8px;background:rgb(241,241,241);"></div>
<div style="left:798.4px;top:482px;width:7.3999999999999995px;height:8px;background:rgb(205,204,207);"></div>
<div style="left:805.5px;top:474px;width:7.3999999999999995px;height:8px;background:rgb(230,235,232);"></div>
<div style="left:805.5px;top:482px;width:7.3999999999999995px;height:8px;background:rgb(201,203,205);"></div>
<div style="left:812.6px;top:474px;width:7.3999999999999995px;height:8px;background:rgb(243,240,241);"></div>
<div style="left:812.6px;top:482px;width:7.3999999999999995px;height:8px;background:rgb(226,233,232);"></div>
<div style="left:819.7px;top:474px;width:7.3999999999999995px;height:8px;background:rgb(243,241,242);"></div>
<div style="left:819.7px;top:482px;width:7.3999999999999995px;height:8px;background:rgb(158,166,165);"></div>
<div style="left:826.8px;top:474px;width:7.3999999999999995px;height:8px;background:rgb(230,231,230);"></div>
<div style="left:826.8px;top:482px;width:7.3999999999999995px;height:8px;background:rgb(230,224,230);"></div>
<div style="left:833.9px;top:474px;width:3.4px;height:8px;background:rgb(216,216,216);"></div>
<div style="left:833.9px;top:482px;width:3.4px;height:8px;background:rgb(150,158,157);"></div>
<div style="left:926px;top:474px;width:7.3999999999999995px;height:8px;background:rgb(241,240,240);"></div>
<div style="left:926px;top:482px;width:7.3999999999999995px;height:8px;background:rgb(225,229,230);"></div>
<div style="left:933.1px;top:474px;width:7.3999999999999995px;height:8px;background:rgb(213,216,214);"></div>
<div style="left:933.1px;top:482px;width:7.3999999999999995px;height:8px;background:rgb(153,157,158);"></div>
<div style="left:940.2px;top:474px;width:7.3999999999999995px;height:8px;background:rgb(211,213,212);"></div>
<div style="left:940.2px;top:482px;width:7.3999999999999995px;height:8px;background:rgb(198,192,198);"></div>
<div style="left:947.3px;top:474px;width:7.3999999999999995px;height:8px;background:rgb(213,218,215);"></div>
<div style="left:947.3px;top:482px;width:7.3999999999999995px;height:8px;background:rgb(191,187,192);"></div>
<div style="left:954.4px;top:474px;width:7.3999999999999995px;height:8px;background:rgb(222,218,220);"></div>
<div style="left:954.4px;top:482px;width:7.3999999999999995px;height:8px;background:rgb(209,210,212);"></div>
<div style="left:961.5px;top:474px;width:7.3999999999999995px;height:8px;background:rgb(213,218,215);"></div>
<div style="left:961.5px;top:482px;width:7.3999999999999995px;height:8px;background:rgb(173,176,177);"></div>
<div style="left:968.6px;top:474px;width:7.3999999999999995px;height:8px;background:rgb(214,218,216);"></div>
<div style="left:968.6px;top:482px;width:7.3999999999999995px;height:8px;background:rgb(167,159,166);"></div>
<div style="left:975.7px;top:474px;width:7.3999999999999995px;height:8px;background:rgb(232,232,232);"></div>
<div style="left:975.7px;top:482px;width:7.3999999999999995px;height:8px;background:rgb(196,198,200);"></div>
<div style="left:982.8px;top:474px;width:7.3999999999999995px;height:8px;background:rgb(237,238,237);"></div>
<div style="left:982.8px;top:482px;width:7.3999999999999995px;height:8px;background:rgb(166,164,168);"></div>
<div style="left:989.9px;top:474px;width:7.3999999999999995px;height:8px;background:rgb(228,230,229);"></div>
<div style="left:989.9px;top:482px;width:7.3999999999999995px;height:8px;background:rgb(210,215,215);"></div>
<div style="left:997.0px;top:474px;width:7.3999999999999995px;height:8px;background:rgb(217,221,219);"></div>
<div style="left:997.0px;top:482px;width:7.3999999999999995px;height:8px;background:rgb(217,220,221);"></div>
<div style="left:1004.1px;top:474px;width:7.3999999999999995px;height:8px;background:rgb(237,241,239);"></div>
<div style="left:1004.1px;top:482px;width:7.3999999999999995px;height:8px;background:rgb(227,223,228);"></div>
<div style="left:1011.2px;top:474px;width:7.3999999999999995px;height:8px;background:rgb(223,221,222);"></div>
<div style="left:1011.2px;top:482px;width:7.3999999999999995px;height:8px;background:rgb(189,191,193);"></div>
<div style="left:1018.3px;top:474px;width:7.3999999999999995px;height:8px;background:rgb(225,226,225);"></div>
<div style="left:1018.3px;top:482px;width:7.3999999999999995px;height:8px;background:rgb(170,175,175);"></div>
<div style="left:1025.4px;top:474px;width:7.3999999999999995px;height:8px;background:rgb(232,232,232);"></div>
<div style="left:1025.4px;top:482px;width:7.3999999999999995px;height:8px;background:rgb(154,157,158);"></div>
<div style="left:1032.5px;top:474px;width:7.3999999999999995px;height:8px;background:rgb(241,239,240);"></div>
<div style="left:1032.5px;top:482px;width:7.3999999999999995px;height:8px;background:rgb(167,159,166);"></div>
<div style="left:1039.6px;top:474px;width:7.3999999999999995px;height:8px;background:rgb(219,223,221);"></div>
<div style="left:1039.6px;top:482px;width:7.3999999999999995px;height:8px;background:rgb(196,189,195);"></div>
<div style="left:1046.7px;top:474px;width:7.3999999999999995px;height:8px;background:rgb(230,235,232);"></div>
<div style="left:1046.7px;top:482px;width:7.3999999999999995px;height:8px;background:rgb(229,229,232);"></div>
<div style="left:1053.8px;top:474px;width:7.3999999999999995px;height:8px;background:rgb(232,237,234);"></div>
<div style="left:1053.8px;top:482px;width:7.3999999999999995px;height:8px;background:rgb(175,180,180);"></div>
<div style="left:1060.9px;top:474px;width:7.3999999999999995px;height:8px;background:rgb(218,221,219);"></div>
<div style="left:1060.9px;top:482px;width:7.3999999999999995px;height:8px;background:rgb(173,178,178);"></div>
<div style="left:1068.0px;top:474px;width:7.3999999999999995px;height:8px;background:rgb(229,231,230);"></div>
<div style="left:1068.0px;top:482px;width:7.3999999999999995px;height:8px;background:rgb(154,153,156);"></div>
<div style="left:1075.1px;top:474px;width:7.3999999999999995px;height:8px;background:rgb(227,229,228);"></div>
<div style="left:1075.1px;top:482px;width:7.3999999999999995px;height:8px;background:rgb(228,220,227);"></div>
<div style="left:1082.2px;top:474px;width:7.3999999999999995px;height:8px;background:rgb(231,231,231);"></div>
<div style="left:1082.2px;top:482px;width:7.3999999999999995px;height:8px;background:rgb(200,204,205);"></div>
<div style="left:1089.3px;top:474px;width:7.3999999999999995px;height:8px;background:rgb(227,228,227);"></div>
<div style="left:1089.3px;top:482px;width:7.3999999999999995px;height:8px;background:rgb(204,200,205);"></div>
<div style="left:1096.4px;top:474px;width:7.3999999999999995px;height:8px;background:rgb(218,217,217);"></div>
<div style="left:1096.4px;top:482px;width:7.3999999999999995px;height:8px;background:rgb(150,152,154);"></div>
<div style="left:1103.5px;top:474px;width:7.3999999999999995px;height:8px;background:rgb(223,224,223);"></div>
<div style="left:1103.5px;top:482px;width:7.3999999999999995px;height:8px;background:rgb(197,198,200);"></div>
<div style="left:1110.6px;top:474px;width:7.3999999999999995px;height:8px;background:rgb(222,220,221);"></div>
<div style="left:1110.6px;top:482px;width:7.3999999999999995px;height:8px;background:rgb(197,197,200);"></div>
<div style="left:1117.7px;top:474px;width:7.3999999999999995px;height:8px;background:rgb(216,218,217);"></div>
<div style="left:1117.7px;top:482px;width:7.3999999999999995px;height:8px;background:rgb(233,229,234);"></div>
<div style="left:1124.8px;top:474px;width:7.3999999999999995px;height:8px;background:rgb(241,240,240);"></div>
<div style="left:1124.8px;top:482px;width:7.3999999999999995px;height:8px;background:rgb(233,235,237);"></div>
<div style="left:1131.9px;top:474px;width:7.3999999999999995px;height:8px;background:rgb(218,222,220);"></div>
<div style="left:1131.9px;top:482px;width:7.3999999999999995px;height:8px;background:rgb(202,204,206);"></div>
<div style="left:1139.0px;top:474px;width:7.3999999999999995px;height:8px;background:rgb(244,240,242);"></div>
<div style="left:1139.0px;top:482px;width:7.3999999999999995px;height:8px;background:rgb(238,231,237);"></div>
<div style="left:1146.1px;top:474px;width:7.3999999999999995px;height:8px;background:rgb(227,226,226);"></div>
<div style="left:1146.1px;top:482px;width:7.3999999999999995px;height:8px;background:rgb(184,191,190);"></div>
<div style="left:1153.2px;top:474px;width:7.3999999999999995px;height:8px;background:rgb(239,240,239);"></div>
<div style="left:1153.2px;top:482px;width:7.3999999999999995px;height:8px;background:rgb(237,230,236);"></div>
<div style="left:1160.3px;top:474px;width:7.3999999999999995px;height:8px;background:rgb(211,212,211);"></div>
<div style="left:1160.3px;top:482px;width:7.3999999999999995px;height:8px;background:rgb(210,209,212);"></div>
<div style="left:1167.4px;top:474px;width:7.3999999999999995px;height:8px;background:rgb(217,219,218);"></div>
<div style="left:1167.4px;top:482px;width:7.3999999999999995px;height:8px;background:rgb(203,204,206);"></div>
<div style="left:1174.5px;top:474px;width:7.3999999999999995px;height:8px;background:rgb(235,239,237);"></div>
<div style="left:1174.5px;top:482px;width:7.3999999999999995px;height:8px;background:rgb(217,219,221);"></div>
<div style="left:1181.6px;top:474px;width:7.3999999999999995px;height:8px;background:rgb(243,240,241);"></div>
<div style="left:1181.6px;top:482px;width:7.3999999999999995px;height:8px;background:rgb(249,242,248);"></div>
<div style="left:1188.7px;top:474px;width:7.3999999999999995px;height:8px;background:rgb(232,233,232);"></div>
<div style="left:1188.7px;top:482px;width:7.3999999999999995px;height:8px;background:rgb(222,218,223);"></div>
<div style="left:1195.8px;top:474px;width:7.3999999999999995px;height:8px;background:rgb(213,218,215);"></div>
<div style="left:1195.8px;top:482px;width:7.3999999999999995px;height:8px;background:rgb(198,199,201);"></div>
<div style="left:1202.9px;top:474px;width:7.3999999999999995px;height:8px;background:rgb(218,219,218);"></div>
<div style="left:1202.9px;top:482px;width:7.3999999999999995px;height:8px;background:rgb(206,211,211);"></div>
<div style="left:1210.0px;top:474px;width:7.3999999999999995px;height:8px;background:rgb(214,213,213);"></div>
<div style="left:1210.0px;top:482px;width:7.3999999999999995px;height:8px;background:rgb(196,200,201);"></div>
<div style="left:1217.1px;top:474px;width:7.3999999999999995px;height:8px;background:rgb(219,221,220);"></div>
<div style="left:1217.1px;top:482px;width:7.3999999999999995px;height:8px;background:rgb(193,187,193);"></div>
<div style="left:1224.2px;top:474px;width:7.3999999999999995px;height:8px;background:rgb(216,214,215);"></div>
<div style="left:1224.2px;top:482px;width:7.3999999999999995px;height:8px;background:rgb(216,216,219);"></div>
<div style="left:1231.3px;top:474px;width:7.3999999999999995px;height:8px;background:rgb(232,227,229);"></div>
<div style="left:1231.3px;top:482px;width:7.3999999999999995px;height:8px;background:rgb(194,192,196);"></div>
<div style="left:1238.4px;top:474px;width:7.3999999999999995px;height:8px;background:rgb(218,214,216);"></div>
<div style="left:1238.4px;top:482px;width:7.3999999999999995px;height:8px;background:rgb(183,179,184);"></div>
<div style="left:1245.5px;top:474px;width:7.3999999999999995px;height:8px;background:rgb(223,222,222);"></div>
<div style="left:1245.5px;top:482px;width:7.3999999999999995px;height:8px;background:rgb(188,189,191);"></div>
<div style="left:1252.6px;top:474px;width:7.3999999999999995px;height:8px;background:rgb(235,233,234);"></div>
<div style="left:1252.6px;top:482px;width:7.3999999999999995px;height:8px;background:rgb(191,187,192);"></div>
<div style="left:1259.7px;top:474px;width:7.3999999999999995px;height:8px;background:rgb(243,242,242);"></div>
<div style="left:1259.7px;top:482px;width:7.3999999999999995px;height:8px;background:rgb(217,218,220);"></div>
<div style="left:1266.8px;top:474px;width:7.3999999999999995px;height:8px;background:rgb(234,237,235);"></div>
<div style="left:1266.8px;top:482px;width:7.3999999999999995px;height:8px;background:rgb(156,155,158);"></div>
<div style="left:1273.9px;top:474px;width:7.3999999999999995px;height:8px;background:rgb(241,239,240);"></div>
<div style="left:1273.9px;top:482px;width:7.3999999999999995px;height:8px;background:rgb(192,193,195);"></div>
<div style="left:1281.0px;top:474px;width:7.3999999999999995px;height:8px;background:rgb(226,222,224);"></div>
<div style="left:1281.0px;top:482px;width:7.3999999999999995px;height:8px;background:rgb(211,205,211);"></div>
<div style="left:1288.1px;top:474px;width:7.3999999999999995px;height:8px;background:rgb(230,225,227);"></div>
<div style="left:1288.1px;top:482px;width:7.3999999999999995px;height:8px;background:rgb(170,171,173);"></div>
<div style="left:1295.2px;top:474px;width:7.3999999999999995px;height:8px;background:rgb(237,238,237);"></div>
<div style="left:1295.2px;top:482px;width:7.3999999999999995px;height:8px;background:rgb(160,160,163);"></div>
<div style="left:1302.3px;top:474px;width:7.3999999999999995px;height:8px;background:rgb(229,226,227);"></div>
<div style="left:1302.3px;top:482px;width:7.3999999999999995px;height:8px;background:rgb(172,177,177);"></div>
<div style="left:1309.4px;top:474px;width:7.3999999999999995px;height:8px;background:rgb(240,240,240);"></div>
<div style="left:1309.4px;top:482px;width:7.3999999999999995px;height:8px;background:rgb(212,216,217);"></div>
<div style="left:1316.5px;top:474px;width:7.3999999999999995px;height:8px;background:rgb(231,227,229);"></div>
<div style="left:1316.5px;top:482px;width:7.3999999999999995px;height:8px;background:rgb(190,188,192);"></div>
<div style="left:1323.6px;top:474px;width:7.3999999999999995px;height:8px;background:rgb(239,239,239);"></div>
<div style="left:1323.6px;top:482px;width:7.3999999999999995px;height:8px;background:rgb(164,169,169);"></div>
<div style="left:1330.7px;top:474px;width:7.3999999999999995px;height:8px;background:rgb(242,239,240);"></div>
<div style="left:1330.7px;top:482px;width:7.3999999999999995px;height:8px;background:rgb(197,189,196);"></div>
<div style="left:1337.8px;top:474px;width:7.3999999999999995px;height:8px;background:rgb(239,236,237);"></div>
<div style="left:1337.8px;top:482px;width:7.3999999999999995px;height:8px;background:rgb(162,161,164);"></div>
<div style="left:1344.9px;top:474px;width:1.4000000000000001px;height:8px;background:rgb(235,231,233);"></div>
<div style="left:1344.9px;top:482px;width:1.4000000000000001px;height:8px;background:rgb(219,219,222);"></div>
<svg style="position:absolute;left:693.94px;top:505px" width="8" height="8"><path d="M8 0 L8 8 L0 8 Z" fill="#d9301c"/></svg>
<div class="t" style="left:708.4399999999999px;top:509.83px;font-family:'Liberation Mono', monospace;font-size:14.9px;color:#1f1f1f;font-weight:400;letter-spacing:-0.001px;transform:scaleY(1.1);transform-origin:0 3.97px">MoveNext<span style="display:inline-block;width:17.88px;position:relative"><span style="position:absolute;left:6.9399999999999995px;top:-6px;width:4px;height:4px;border-radius:2px;background:#1f1f1f"></span></span>Octopus.</div>
<div class="t" style="left:1620.4px;top:509.83px;font-family:'Liberation Mono', monospace;font-size:14.9px;color:#1f1f1f;font-weight:400;letter-spacing:-0.001px;transform:scaleY(1.1);transform-origin:0 3.97px"><b>dler+&lt;Handle&gt;d__7</b>.MoveNext()</div>
<div style="left:871px;top:501px;width:7.3999999999999995px;height:8px;background:rgb(239,240,239);"></div>
<div style="left:871px;top:509px;width:7.3999999999999995px;height:8px;background:rgb(181,183,185);"></div>
<div style="left:878.1px;top:501px;width:7.3999999999999995px;height:8px;background:rgb(226,223,224);"></div>
<div style="left:878.1px;top:509px;width:7.3999999999999995px;height:8px;background:rgb(163,167,168);"></div>
<div style="left:885.2px;top:501px;width:7.3999999999999995px;height:8px;background:rgb(244,240,242);"></div>
<div style="left:885.2px;top:509px;width:7.3999999999999995px;height:8px;background:rgb(237,231,237);"></div>
<div style="left:892.3px;top:501px;width:7.3999999999999995px;height:8px;background:rgb(209,213,211);"></div>
<div style="left:892.3px;top:509px;width:7.3999999999999995px;height:8px;background:rgb(223,223,226);"></div>
<div style="left:899.4px;top:501px;width:7.3999999999999995px;height:8px;background:rgb(217,216,216);"></div>
<div style="left:899.4px;top:509px;width:7.3999999999999995px;height:8px;background:rgb(193,200,199);"></div>
<div style="left:906.5px;top:501px;width:7.3999999999999995px;height:8px;background:rgb(219,222,220);"></div>
<div style="left:906.5px;top:509px;width:7.3999999999999995px;height:8px;background:rgb(197,196,199);"></div>
<div style="left:913.6px;top:501px;width:7.3999999999999995px;height:8px;background:rgb(218,221,219);"></div>
<div style="left:913.6px;top:509px;width:7.3999999999999995px;height:8px;background:rgb(201,203,205);"></div>
<div style="left:920.7px;top:501px;width:7.3999999999999995px;height:8px;background:rgb(232,228,230);"></div>
<div style="left:920.7px;top:509px;width:7.3999999999999995px;height:8px;background:rgb(146,154,153);"></div>
<div style="left:927.8px;top:501px;width:7.3999999999999995px;height:8px;background:rgb(239,240,239);"></div>
<div style="left:927.8px;top:509px;width:7.3999999999999995px;height:8px;background:rgb(232,237,237);"></div>
<div style="left:934.9px;top:501px;width:7.3999999999999995px;height:8px;background:rgb(221,219,220);"></div>
<div style="left:934.9px;top:509px;width:7.3999999999999995px;height:8px;background:rgb(181,179,183);"></div>
<div style="left:942.0px;top:501px;width:7.3999999999999995px;height:8px;background:rgb(222,226,224);"></div>
<div style="left:942.0px;top:509px;width:7.3999999999999995px;height:8px;background:rgb(161,168,167);"></div>
<div style="left:949.1px;top:501px;width:7.3999999999999995px;height:8px;background:rgb(227,231,229);"></div>
<div style="left:949.1px;top:509px;width:7.3999999999999995px;height:8px;background:rgb(201,196,201);"></div>
<div style="left:956.2px;top:501px;width:7.3999999999999995px;height:8px;background:rgb(210,212,211);"></div>
<div style="left:956.2px;top:509px;width:7.3999999999999995px;height:8px;background:rgb(182,176,182);"></div>
<div style="left:963.3px;top:501px;width:7.3999999999999995px;height:8px;background:rgb(234,235,234);"></div>
<div style="left:963.3px;top:509px;width:7.3999999999999995px;height:8px;background:rgb(162,162,165);"></div>
<div style="left:970.4px;top:501px;width:7.3999999999999995px;height:8px;background:rgb(212,217,214);"></div>
<div style="left:970.4px;top:509px;width:7.3999999999999995px;height:8px;background:rgb(170,171,173);"></div>
<div style="left:977.5px;top:501px;width:7.3999999999999995px;height:8px;background:rgb(238,237,237);"></div>
<div style="left:977.5px;top:509px;width:7.3999999999999995px;height:8px;background:rgb(187,182,187);"></div>
<div style="left:984.6px;top:501px;width:7.3999999999999995px;height:8px;background:rgb(216,221,218);"></div>
<div style="left:984.6px;top:509px;width:7.3999999999999995px;height:8px;background:rgb(173,169,174);"></div>
<div style="left:991.7px;top:501px;width:7.3999999999999995px;height:8px;background:rgb(212,213,212);"></div>
<div style="left:991.7px;top:509px;width:7.3999999999999995px;height:8px;background:rgb(152,160,159);"></div>
<div style="left:998.8px;top:501px;width:7.3999999999999995px;height:8px;background:rgb(224,224,224);"></div>
<div style="left:998.8px;top:509px;width:7.3999999999999995px;height:8px;background:rgb(235,227,234);"></div>
<div style="left:1005.9px;top:501px;width:7.3999999999999995px;height:8px;background:rgb(233,229,231);"></div>
<div style="left:1005.9px;top:509px;width:7.3999999999999995px;height:8px;background:rgb(225,218,224);"></div>
<div style="left:1013.0px;top:501px;width:7.3999999999999995px;height:8px;background:rgb(238,234,236);"></div>
<div style="left:1013.0px;top:509px;width:7.3999999999999995px;height:8px;background:rgb(177,184,183);"></div>
<div style="left:1020.1px;top:501px;width:7.3999999999999995px;height:8px;background:rgb(225,221,223);"></div>
<div style="left:1020.1px;top:509px;width:7.3999999999999995px;height:8px;background:rgb(204,196,203);"></div>
<div style="left:1027.2px;top:501px;width:7.3999999999999995px;height:8px;background:rgb(229,230,229);"></div>
<div style="left:1027.2px;top:509px;width:7.3999999999999995px;height:8px;background:rgb(146,151,151);"></div>
<div style="left:1034.3px;top:501px;width:7.3999999999999995px;height:8px;background:rgb(212,217,214);"></div>
<div style="left:1034.3px;top:509px;width:7.3999999999999995px;height:8px;background:rgb(190,187,191);"></div>
<div style="left:1041.4px;top:501px;width:7.3999999999999995px;height:8px;background:rgb(217,222,219);"></div>
<div style="left:1041.4px;top:509px;width:7.3999999999999995px;height:8px;background:rgb(208,211,212);"></div>
<div style="left:1048.5px;top:501px;width:7.3999999999999995px;height:8px;background:rgb(229,227,228);"></div>
<div style="left:1048.5px;top:509px;width:7.3999999999999995px;height:8px;background:rgb(200,200,203);"></div>
<div style="left:1055.6px;top:501px;width:7.3999999999999995px;height:8px;background:rgb(227,227,227);"></div>
<div style="left:1055.6px;top:509px;width:7.3999999999999995px;height:8px;background:rgb(219,213,219);"></div>
<div style="left:1062.7px;top:501px;width:7.3999999999999995px;height:8px;background:rgb(239,238,238);"></div>
<div style="left:1062.7px;top:509px;width:7.3999999999999995px;height:8px;background:rgb(183,180,184);"></div>
<div style="left:1069.8px;top:501px;width:7.3999999999999995px;height:8px;background:rgb(219,216,217);"></div>
<div style="left:1069.8px;top:509px;width:7.3999999999999995px;height:8px;background:rgb(173,175,177);"></div>
<div style="left:1076.9px;top:501px;width:7.3999999999999995px;height:8px;background:rgb(215,212,213);"></div>
<div style="left:1076.9px;top:509px;width:7.3999999999999995px;height:8px;background:rgb(152,150,154);"></div>
<div style="left:1084.0px;top:501px;width:7.3999999999999995px;height:8px;background:rgb(224,229,226);"></div>
<div style="left:1084.0px;top:509px;width:7.3999999999999995px;height:8px;background:rgb(210,212,214);"></div>
<div style="left:1091.1px;top:501px;width:7.3999999999999995px;height:8px;background:rgb(245,241,243);"></div>
<div style="left:1091.1px;top:509px;width:7.3999999999999995px;height:8px;background:rgb(161,157,162);"></div>
<div style="left:1098.2px;top:501px;width:7.3999999999999995px;height:8px;background:rgb(216,215,215);"></div>
<div style="left:1098.2px;top:509px;width:7.3999999999999995px;height:8px;background:rgb(203,196,202);"></div>
<div style="left:1105.3px;top:501px;width:7.3999999999999995px;height:8px;background:rgb(239,240,239);"></div>
<div style="left:1105.3px;top:509px;width:7.3999999999999995px;height:8px;background:rgb(230,229,232);"></div>
<div style="left:1112.4px;top:501px;width:7.3999999999999995px;height:8px;background:rgb(240,240,240);"></div>
<div style="left:1112.4px;top:509px;width:7.3999999999999995px;height:8px;background:rgb(231,235,236);"></div>
<div style="left:1119.5px;top:501px;width:7.3999999999999995px;height:8px;background:rgb(226,230,228);"></div>
<div style="left:1119.5px;top:509px;width:7.3999999999999995px;height:8px;background:rgb(147,154,153);"></div>
<div style="left:1126.6px;top:501px;width:7.3999999999999995px;height:8px;background:rgb(232,229,230);"></div>
<div style="left:1126.6px;top:509px;width:7.3999999999999995px;height:8px;background:rgb(209,214,214);"></div>
<div style="left:1133.7px;top:501px;width:7.3999999999999995px;height:8px;background:rgb(229,227,228);"></div>
<div style="left:1133.7px;top:509px;width:7.3999999999999995px;height:8px;background:rgb(185,189,190);"></div>
<div style="left:1140.8px;top:501px;width:7.3999999999999995px;height:8px;background:rgb(225,227,226);"></div>
<div style="left:1140.8px;top:509px;width:7.3999999999999995px;height:8px;background:rgb(200,207,206);"></div>
<div style="left:1147.9px;top:501px;width:7.3999999999999995px;height:8px;background:rgb(227,229,228);"></div>
<div style="left:1147.9px;top:509px;width:7.3999999999999995px;height:8px;background:rgb(157,150,156);"></div>
<div style="left:1155.0px;top:501px;width:7.3999999999999995px;height:8px;background:rgb(235,238,236);"></div>
<div style="left:1155.0px;top:509px;width:7.3999999999999995px;height:8px;background:rgb(207,200,206);"></div>
<div style="left:1162.1px;top:501px;width:7.3999999999999995px;height:8px;background:rgb(220,225,222);"></div>
<div style="left:1162.1px;top:509px;width:7.3999999999999995px;height:8px;background:rgb(197,200,201);"></div>
<div style="left:1169.2px;top:501px;width:7.3999999999999995px;height:8px;background:rgb(240,240,240);"></div>
<div style="left:1169.2px;top:509px;width:7.3999999999999995px;height:8px;background:rgb(246,239,245);"></div>
<div style="left:1176.3px;top:501px;width:7.3999999999999995px;height:8px;background:rgb(234,230,232);"></div>
<div style="left:1176.3px;top:509px;width:7.3999999999999995px;height:8px;background:rgb(210,206,211);"></div>
<div style="left:1183.4px;top:501px;width:7.3999999999999995px;height:8px;background:rgb(240,241,240);"></div>
<div style="left:1183.4px;top:509px;width:7.3999999999999995px;height:8px;background:rgb(185,193,192);"></div>
<div style="left:1190.5px;top:501px;width:7.3999999999999995px;height:8px;background:rgb(240,240,240);"></div>
<div style="left:1190.5px;top:509px;width:7.3999999999999995px;height:8px;background:rgb(236,238,240);"></div>
<div style="left:1197.6px;top:501px;width:7.3999999999999995px;height:8px;background:rgb(238,235,236);"></div>
<div style="left:1197.6px;top:509px;width:7.3999999999999995px;height:8px;background:rgb(178,170,177);"></div>
<div style="left:1204.7px;top:501px;width:7.3999999999999995px;height:8px;background:rgb(229,229,229);"></div>
<div style="left:1204.7px;top:509px;width:7.3999999999999995px;height:8px;background:rgb(212,214,216);"></div>
<div style="left:1211.8px;top:501px;width:7.3999999999999995px;height:8px;background:rgb(239,239,239);"></div>
<div style="left:1211.8px;top:509px;width:7.3999999999999995px;height:8px;background:rgb(171,165,171);"></div>
<div style="left:1218.9px;top:501px;width:7.3999999999999995px;height:8px;background:rgb(244,239,241);"></div>
<div style="left:1218.9px;top:509px;width:7.3999999999999995px;height:8px;background:rgb(159,166,165);"></div>
<div style="left:1226.0px;top:501px;width:7.3999999999999995px;height:8px;background:rgb(232,229,230);"></div>
<div style="left:1226.0px;top:509px;width:7.3999999999999995px;height:8px;background:rgb(220,219,222);"></div>
<div style="left:1233.1px;top:501px;width:7.3999999999999995px;height:8px;background:rgb(211,216,213);"></div>
<div style="left:1233.1px;top:509px;width:7.3999999999999995px;height:8px;background:rgb(226,228,230);"></div>
<div style="left:1240.2px;top:501px;width:7.3999999999999995px;height:8px;background:rgb(218,213,215);"></div>
<div style="left:1240.2px;top:509px;width:7.3999999999999995px;height:8px;background:rgb(165,160,165);"></div>
<div style="left:1247.3px;top:501px;width:7.3999999999999995px;height:8px;background:rgb(216,220,218);"></div>
<div style="left:1247.3px;top:509px;width:7.3999999999999995px;height:8px;background:rgb(204,210,210);"></div>
<div style="left:1254.4px;top:501px;width:7.3999999999999995px;height:8px;background:rgb(244,240,242);"></div>
<div style="left:1254.4px;top:509px;width:7.3999999999999995px;height:8px;background:rgb(244,241,245);"></div>
<div style="left:1261.5px;top:501px;width:7.3999999999999995px;height:8px;background:rgb(230,226,228);"></div>
<div style="left:1261.5px;top:509px;width:7.3999999999999995px;height:8px;background:rgb(216,221,221);"></div>
<div style="left:1268.6px;top:501px;width:7.3999999999999995px;height:8px;background:rgb(238,240,239);"></div>
<div style="left:1268.6px;top:509px;width:7.3999999999999995px;height:8px;background:rgb(239,233,239);"></div>
<div style="left:1275.7px;top:501px;width:7.3999999999999995px;height:8px;background:rgb(243,240,241);"></div>
<div style="left:1275.7px;top:509px;width:7.3999999999999995px;height:8px;background:rgb(226,234,233);"></div>
<div style="left:1282.8px;top:501px;width:7.3999999999999995px;height:8px;background:rgb(237,239,238);"></div>
<div style="left:1282.8px;top:509px;width:7.3999999999999995px;height:8px;background:rgb(198,200,202);"></div>
<div style="left:1289.9px;top:501px;width:7.3999999999999995px;height:8px;background:rgb(242,240,241);"></div>
<div style="left:1289.9px;top:509px;width:7.3999999999999995px;height:8px;background:rgb(242,236,242);"></div>
<div style="left:1297.0px;top:501px;width:7.3999999999999995px;height:8px;background:rgb(236,239,237);"></div>
<div style="left:1297.0px;top:509px;width:7.3999999999999995px;height:8px;background:rgb(195,195,198);"></div>
<div style="left:1304.1px;top:501px;width:7.3999999999999995px;height:8px;background:rgb(226,221,223);"></div>
<div style="left:1304.1px;top:509px;width:7.3999999999999995px;height:8px;background:rgb(217,219,221);"></div>
<div style="left:1311.2px;top:501px;width:7.3999999999999995px;height:8px;background:rgb(227,229,228);"></div>
<div style="left:1311.2px;top:509px;width:7.3999999999999995px;height:8px;background:rgb(218,220,222);"></div>
<div style="left:1318.3px;top:501px;width:7.3999999999999995px;height:8px;background:rgb(222,218,220);"></div>
<div style="left:1318.3px;top:509px;width:7.3999999999999995px;height:8px;background:rgb(198,204,204);"></div>
<div style="left:1325.4px;top:501px;width:7.3999999999999995px;height:8px;background:rgb(224,219,221);"></div>
<div style="left:1325.4px;top:509px;width:7.3999999999999995px;height:8px;background:rgb(182,189,188);"></div>
<div style="left:1332.5px;top:501px;width:7.3999999999999995px;height:8px;background:rgb(230,226,228);"></div>
<div style="left:1332.5px;top:509px;width:7.3999999999999995px;height:8px;background:rgb(183,190,189);"></div>
<div style="left:1339.6px;top:501px;width:7.3999999999999995px;height:8px;background:rgb(228,225,226);"></div>
<div style="left:1339.6px;top:509px;width:7.3999999999999995px;height:8px;background:rgb(204,203,206);"></div>
<div style="left:1346.7px;top:501px;width:7.3999999999999995px;height:8px;background:rgb(224,228,226);"></div>
<div style="left:1346.7px;top:509px;width:7.3999999999999995px;height:8px;background:rgb(188,190,192);"></div>
<div style="left:1353.8px;top:501px;width:7.3999999999999995px;height:8px;background:rgb(229,227,228);"></div>
<div style="left:1353.8px;top:509px;width:7.3999999999999995px;height:8px;background:rgb(196,191,196);"></div>
<div style="left:1360.9px;top:501px;width:7.3999999999999995px;height:8px;background:rgb(217,216,216);"></div>
<div style="left:1360.9px;top:509px;width:7.3999999999999995px;height:8px;background:rgb(145,151,151);"></div>
<div style="left:1368.0px;top:501px;width:7.3999999999999995px;height:8px;background:rgb(241,240,240);"></div>
<div style="left:1368.0px;top:509px;width:7.3999999999999995px;height:8px;background:rgb(230,238,237);"></div>
<div style="left:1375.1px;top:501px;width:7.3999999999999995px;height:8px;background:rgb(240,239,239);"></div>
<div style="left:1375.1px;top:509px;width:7.3999999999999995px;height:8px;background:rgb(215,212,216);"></div>
<div style="left:1382.2px;top:501px;width:7.3999999999999995px;height:8px;background:rgb(211,212,211);"></div>
<div style="left:1382.2px;top:509px;width:7.3999999999999995px;height:8px;background:rgb(213,217,218);"></div>
<div style="left:1389.3px;top:501px;width:7.3999999999999995px;height:8px;background:rgb(211,212,211);"></div>
<div style="left:1389.3px;top:509px;width:7.3999999999999995px;height:8px;background:rgb(186,190,191);"></div>
<div style="left:1396.4px;top:501px;width:7.3999999999999995px;height:8px;background:rgb(222,223,222);"></div>
<div style="left:1396.4px;top:509px;width:7.3999999999999995px;height:8px;background:rgb(212,207,212);"></div>
<div style="left:1403.5px;top:501px;width:7.3999999999999995px;height:8px;background:rgb(240,242,241);"></div>
<div style="left:1403.5px;top:509px;width:7.3999999999999995px;height:8px;background:rgb(211,213,215);"></div>
<div style="left:1410.6px;top:501px;width:7.3999999999999995px;height:8px;background:rgb(243,240,241);"></div>
<div style="left:1410.6px;top:509px;width:7.3999999999999995px;height:8px;background:rgb(238,233,238);"></div>
<div style="left:1417.7px;top:501px;width:7.3999999999999995px;height:8px;background:rgb(217,219,218);"></div>
<div style="left:1417.7px;top:509px;width:7.3999999999999995px;height:8px;background:rgb(202,195,201);"></div>
<div style="left:1424.8px;top:501px;width:7.3999999999999995px;height:8px;background:rgb(226,229,227);"></div>
<div style="left:1424.8px;top:509px;width:7.3999999999999995px;height:8px;background:rgb(183,175,182);"></div>
<div style="left:1431.9px;top:501px;width:7.3999999999999995px;height:8px;background:rgb(219,222,220);"></div>
<div style="left:1431.9px;top:509px;width:7.3999999999999995px;height:8px;background:rgb(193,197,198);"></div>
<div style="left:1439.0px;top:501px;width:7.3999999999999995px;height:8px;background:rgb(234,229,231);"></div>
<div style="left:1439.0px;top:509px;width:7.3999999999999995px;height:8px;background:rgb(197,201,202);"></div>
<div style="left:1446.1px;top:501px;width:7.3999999999999995px;height:8px;background:rgb(231,233,232);"></div>
<div style="left:1446.1px;top:509px;width:7.3999999999999995px;height:8px;background:rgb(170,167,171);"></div>
<div style="left:1453.2px;top:501px;width:7.3999999999999995px;height:8px;background:rgb(242,240,241);"></div>
<div style="left:1453.2px;top:509px;width:7.3999999999999995px;height:8px;background:rgb(227,234,233);"></div>
<div style="left:1460.3px;top:501px;width:7.3999999999999995px;height:8px;background:rgb(222,221,221);"></div>
<div style="left:1460.3px;top:509px;width:7.3999999999999995px;height:8px;background:rgb(190,187,191);"></div>
<div style="left:1467.4px;top:501px;width:7.3999999999999995px;height:8px;background:rgb(227,230,228);"></div>
<div style="left:1467.4px;top:509px;width:7.3999999999999995px;height:8px;background:rgb(189,193,194);"></div>
<div style="left:1474.5px;top:501px;width:7.3999999999999995px;height:8px;background:rgb(219,224,221);"></div>
<div style="left:1474.5px;top:509px;width:7.3999999999999995px;height:8px;background:rgb(203,206,207);"></div>
<div style="left:1481.6px;top:501px;width:7.3999999999999995px;height:8px;background:rgb(214,212,213);"></div>
<div style="left:1481.6px;top:509px;width:7.3999999999999995px;height:8px;background:rgb(151,157,157);"></div>
<div style="left:1488.7px;top:501px;width:7.3999999999999995px;height:8px;background:rgb(235,240,237);"></div>
<div style="left:1488.7px;top:509px;width:7.3999999999999995px;height:8px;background:rgb(238,241,242);"></div>
<div style="left:1495.8px;top:501px;width:7.3999999999999995px;height:8px;background:rgb(216,215,215);"></div>
<div style="left:1495.8px;top:509px;width:7.3999999999999995px;height:8px;background:rgb(201,195,201);"></div>
<div style="left:1502.9px;top:501px;width:7.3999999999999995px;height:8px;background:rgb(217,222,219);"></div>
<div style="left:1502.9px;top:509px;width:7.3999999999999995px;height:8px;background:rgb(176,172,177);"></div>
<div style="left:1510.0px;top:501px;width:7.3999999999999995px;height:8px;background:rgb(227,232,229);"></div>
<div style="left:1510.0px;top:509px;width:7.3999999999999995px;height:8px;background:rgb(217,222,222);"></div>
<div style="left:1517.1px;top:501px;width:7.3999999999999995px;height:8px;background:rgb(213,212,212);"></div>
<div style="left:1517.1px;top:509px;width:7.3999999999999995px;height:8px;background:rgb(175,171,176);"></div>
<div style="left:1524.2px;top:501px;width:7.3999999999999995px;height:8px;background:rgb(220,215,217);"></div>
<div style="left:1524.2px;top:509px;width:7.3999999999999995px;height:8px;background:rgb(183,187,188);"></div>
<div style="left:1531.3px;top:501px;width:7.3999999999999995px;height:8px;background:rgb(221,219,220);"></div>
<div style="left:1531.3px;top:509px;width:7.3999999999999995px;height:8px;background:rgb(204,204,207);"></div>
<div style="left:1538.4px;top:501px;width:7.3999999999999995px;height:8px;background:rgb(215,220,217);"></div>
<div style="left:1538.4px;top:509px;width:7.3999999999999995px;height:8px;background:rgb(195,191,196);"></div>
<div style="left:1545.5px;top:501px;width:7.3999999999999995px;height:8px;background:rgb(245,240,242);"></div>
<div style="left:1545.5px;top:509px;width:7.3999999999999995px;height:8px;background:rgb(240,236,241);"></div>
<div style="left:1552.6px;top:501px;width:7.3999999999999995px;height:8px;background:rgb(233,231,232);"></div>
<div style="left:1552.6px;top:509px;width:7.3999999999999995px;height:8px;background:rgb(206,200,206);"></div>
<div style="left:1559.7px;top:501px;width:7.3999999999999995px;height:8px;background:rgb(219,214,216);"></div>
<div style="left:1559.7px;top:509px;width:7.3999999999999995px;height:8px;background:rgb(209,202,208);"></div>
<div style="left:1566.8px;top:501px;width:7.3999999999999995px;height:8px;background:rgb(236,240,238);"></div>
<div style="left:1566.8px;top:509px;width:7.3999999999999995px;height:8px;background:rgb(233,238,238);"></div>
<div style="left:1573.9px;top:501px;width:7.3999999999999995px;height:8px;background:rgb(231,228,229);"></div>
<div style="left:1573.9px;top:509px;width:7.3999999999999995px;height:8px;background:rgb(219,226,225);"></div>
<div style="left:1581.0px;top:501px;width:7.3999999999999995px;height:8px;background:rgb(218,214,216);"></div>
<div style="left:1581.0px;top:509px;width:7.3999999999999995px;height:8px;background:rgb(186,191,191);"></div>
<div style="left:1588.1px;top:501px;width:7.3999999999999995px;height:8px;background:rgb(222,217,219);"></div>
<div style="left:1588.1px;top:509px;width:7.3999999999999995px;height:8px;background:rgb(203,200,204);"></div>
<div style="left:1595.2px;top:501px;width:7.3999999999999995px;height:8px;background:rgb(214,214,214);"></div>
<div style="left:1595.2px;top:509px;width:7.3999999999999995px;height:8px;background:rgb(199,196,200);"></div>
<div style="left:1602.3px;top:501px;width:7.3999999999999995px;height:8px;background:rgb(230,230,230);"></div>
<div style="left:1602.3px;top:509px;width:7.3999999999999995px;height:8px;background:rgb(203,198,203);"></div>
<div style="left:1609.4px;top:501px;width:7.3999999999999995px;height:8px;background:rgb(241,237,239);"></div>
<div style="left:1609.4px;top:509px;width:7.3999999999999995px;height:8px;background:rgb(198,205,204);"></div>
<div style="left:1616.5px;top:501px;width:4.8px;height:8px;background:rgb(233,230,231);"></div>
<div style="left:1616.5px;top:509px;width:4.8px;height:8px;background:rgb(188,180,187);"></div>
<svg style="position:absolute;left:702.70px;top:532px" width="8" height="8"><path d="M8 0 L8 8 L0 8 Z" fill="#d9301c"/></svg>
<div class="t" style="left:717.1999999999999px;top:536.83px;font-family:'Liberation Mono', monospace;font-size:14.9px;color:#7e7e7e;font-weight:400;letter-spacing:-0.001px;transform:scaleY(1.1);transform-origin:0 3.97px">Start<span style="display:inline-block;width:17.88px;position:relative"><span style="position:absolute;left:6.9399999999999995px;top:-6px;width:4px;height:4px;border-radius:2px;background:#7e7e7e"></span></span>System.Runtime.CompilerServices.<b>AsyncMethodBuilderCore</b>.Start(ref !!0)</div>
<svg style="position:absolute;left:711.46px;top:559px" width="8" height="8"><path d="M8 0 L8 8 L0 8 Z" fill="#d9301c"/></svg>
<div class="t" style="left:725.96px;top:563.83px;font-family:'Liberation Mono', monospace;font-size:14.9px;color:#1f1f1f;font-weight:400;letter-spacing:-0.001px;transform:scaleY(1.1);transform-origin:0 3.97px">Handle<span style="display:inline-block;width:17.88px;position:relative"><span style="position:absolute;left:6.9399999999999995px;top:-6px;width:4px;height:4px;border-radius:2px;background:#1f1f1f"></span></span>Octopus.</div>
<div class="t" style="left:1262px;top:563.83px;font-family:'Liberation Mono', monospace;font-size:14.9px;color:#1f1f1f;font-weight:400;letter-spacing:-0.001px;transform:scaleY(1.1);transform-origin:0 3.97px"><b>.SubTaskDataExtractedIntegrationEventHandler</b>.Handle(SubTaskDataExtracte</div>
<div style="left:867px;top:555px;width:7.3999999999999995px;height:8px;background:rgb(232,230,231);"></div>
<div style="left:867px;top:563px;width:7.3999999999999995px;height:8px;background:rgb(165,159,165);"></div>
<div style="left:874.1px;top:555px;width:7.3999999999999995px;height:8px;background:rgb(237,240,238);"></div>
<div style="left:874.1px;top:563px;width:7.3999999999999995px;height:8px;background:rgb(156,152,157);"></div>
<div style="left:881.2px;top:555px;width:7.3999999999999995px;height:8px;background:rgb(235,240,237);"></div>
<div style="left:881.2px;top:563px;width:7.3999999999999995px;height:8px;background:rgb(243,238,243);"></div>
<div style="left:888.3px;top:555px;width:7.3999999999999995px;height:8px;background:rgb(220,217,218);"></div>
<div style="left:888.3px;top:563px;width:7.3999999999999995px;height:8px;background:rgb(151,158,157);"></div>
<div style="left:895.4px;top:555px;width:7.3999999999999995px;height:8px;background:rgb(219,215,217);"></div>
<div style="left:895.4px;top:563px;width:7.3999999999999995px;height:8px;background:rgb(168,169,171);"></div>
<div style="left:902.5px;top:555px;width:7.3999999999999995px;height:8px;background:rgb(217,219,218);"></div>
<div style="left:902.5px;top:563px;width:7.3999999999999995px;height:8px;background:rgb(180,184,185);"></div>
<div style="left:909.6px;top:555px;width:7.3999999999999995px;height:8px;background:rgb(223,220,221);"></div>
<div style="left:909.6px;top:563px;width:7.3999999999999995px;height:8px;background:rgb(165,163,167);"></div>
<div style="left:916.7px;top:555px;width:7.3999999999999995px;height:8px;background:rgb(218,223,220);"></div>
<div style="left:916.7px;top:563px;width:7.3999999999999995px;height:8px;background:rgb(166,174,173);"></div>
<div style="left:923.8px;top:555px;width:7.3999999999999995px;height:8px;background:rgb(214,214,214);"></div>
<div style="left:923.8px;top:563px;width:7.3999999999999995px;height:8px;background:rgb(200,196,201);"></div>
<div style="left:930.9px;top:555px;width:7.3999999999999995px;height:8px;background:rgb(236,236,236);"></div>
<div style="left:930.9px;top:563px;width:7.3999999999999995px;height:8px;background:rgb(176,174,178);"></div>
<div style="left:938.0px;top:555px;width:7.3999999999999995px;height:8px;background:rgb(237,242,239);"></div>
<div style="left:938.0px;top:563px;width:7.3999999999999995px;height:8px;background:rgb(223,217,223);"></div>
<div style="left:945.1px;top:555px;width:7.3999999999999995px;height:8px;background:rgb(229,228,228);"></div>
<div style="left:945.1px;top:563px;width:7.3999999999999995px;height:8px;background:rgb(152,158,158);"></div>
<div style="left:952.2px;top:555px;width:7.3999999999999995px;height:8px;background:rgb(214,213,213);"></div>
<div style="left:952.2px;top:563px;width:7.3999999999999995px;height:8px;background:rgb(177,182,182);"></div>
<div style="left:959.3px;top:555px;width:7.3999999999999995px;height:8px;background:rgb(226,230,228);"></div>
<div style="left:959.3px;top:563px;width:7.3999999999999995px;height:8px;background:rgb(187,190,191);"></div>
<div style="left:966.4px;top:555px;width:7.3999999999999995px;height:8px;background:rgb(229,225,227);"></div>
<div style="left:966.4px;top:563px;width:7.3999999999999995px;height:8px;background:rgb(173,181,180);"></div>
<div style="left:973.5px;top:555px;width:7.3999999999999995px;height:8px;background:rgb(239,239,239);"></div>
<div style="left:973.5px;top:563px;width:7.3999999999999995px;height:8px;background:rgb(190,190,193);"></div>
<div style="left:980.6px;top:555px;width:7.3999999999999995px;height:8px;background:rgb(222,222,222);"></div>
<div style="left:980.6px;top:563px;width:7.3999999999999995px;height:8px;background:rgb(199,200,202);"></div>
<div style="left:987.7px;top:555px;width:7.3999999999999995px;height:8px;background:rgb(232,229,230);"></div>
<div style="left:987.7px;top:563px;width:7.3999999999999995px;height:8px;background:rgb(194,191,195);"></div>
<div style="left:994.8px;top:555px;width:7.3999999999999995px;height:8px;background:rgb(238,236,237);"></div>
<div style="left:994.8px;top:563px;width:7.3999999999999995px;height:8px;background:rgb(193,195,197);"></div>
<div style="left:1001.9px;top:555px;width:7.3999999999999995px;height:8px;background:rgb(234,238,236);"></div>
<div style="left:1001.9px;top:563px;width:7.3999999999999995px;height:8px;background:rgb(192,196,197);"></div>
<div style="left:1009.0px;top:555px;width:7.3999999999999995px;height:8px;background:rgb(217,212,214);"></div>
<div style="left:1009.0px;top:563px;width:7.3999999999999995px;height:8px;background:rgb(183,184,186);"></div>
<div style="left:1016.1px;top:555px;width:7.3999999999999995px;height:8px;background:rgb(236,238,237);"></div>
<div style="left:1016.1px;top:563px;width:7.3999999999999995px;height:8px;background:rgb(205,200,205);"></div>
<div style="left:1023.2px;top:555px;width:7.3999999999999995px;height:8px;background:rgb(228,229,228);"></div>
<div style="left:1023.2px;top:563px;width:7.3999999999999995px;height:8px;background:rgb(182,185,186);"></div>
<div style="left:1030.3px;top:555px;width:7.3999999999999995px;height:8px;background:rgb(228,223,225);"></div>
<div style="left:1030.3px;top:563px;width:7.3999999999999995px;height:8px;background:rgb(217,213,218);"></div>
<div style="left:1037.4px;top:555px;width:7.3999999999999995px;height:8px;background:rgb(246,242,244);"></div>
<div style="left:1037.4px;top:563px;width:7.3999999999999995px;height:8px;background:rgb(193,188,193);"></div>
<div style="left:1044.5px;top:555px;width:7.3999999999999995px;height:8px;background:rgb(216,221,218);"></div>
<div style="left:1044.5px;top:563px;width:7.3999999999999995px;height:8px;background:rgb(171,178,177);"></div>
<div style="left:1051.6px;top:555px;width:7.3999999999999995px;height:8px;background:rgb(230,228,229);"></div>
<div style="left:1051.6px;top:563px;width:7.3999999999999995px;height:8px;background:rgb(186,193,192);"></div>
<div style="left:1058.7px;top:555px;width:7.3999999999999995px;height:8px;background:rgb(233,238,235);"></div>
<div style="left:1058.7px;top:563px;width:7.3999999999999995px;height:8px;background:rgb(184,187,188);"></div>
<div style="left:1065.8px;top:555px;width:7.3999999999999995px;height:8px;background:rgb(240,238,239);"></div>
<div style="left:1065.8px;top:563px;width:7.3999999999999995px;height:8px;background:rgb(158,158,161);"></div>
<div style="left:1072.9px;top:555px;width:7.3999999999999995px;height:8px;background:rgb(218,215,216);"></div>
<div style="left:1072.9px;top:563px;width:7.3999999999999995px;height:8px;background:rgb(181,187,187);"></div>
<div style="left:1080.0px;top:555px;width:7.3999999999999995px;height:8px;background:rgb(240,242,241);"></div>
<div style="left:1080.0px;top:563px;width:7.3999999999999995px;height:8px;background:rgb(204,212,211);"></div>
<div style="left:1087.1px;top:555px;width:7.3999999999999995px;height:8px;background:rgb(228,231,229);"></div>
<div style="left:1087.1px;top:563px;width:7.3999999999999995px;height:8px;background:rgb(161,156,161);"></div>
<div style="left:1094.2px;top:555px;width:7.3999999999999995px;height:8px;background:rgb(233,229,231);"></div>
<div style="left:1094.2px;top:563px;width:7.3999999999999995px;height:8px;background:rgb(195,187,194);"></div>
<div style="left:1101.3px;top:555px;width:7.3999999999999995px;height:8px;background:rgb(226,221,223);"></div>
<div style="left:1101.3px;top:563px;width:7.3999999999999995px;height:8px;background:rgb(192,185,191);"></div>
<div style="left:1108.4px;top:555px;width:7.3999999999999995px;height:8px;background:rgb(230,233,231);"></div>
<div style="left:1108.4px;top:563px;width:7.3999999999999995px;height:8px;background:rgb(168,163,168);"></div>
<div style="left:1115.5px;top:555px;width:7.3999999999999995px;height:8px;background:rgb(211,212,211);"></div>
<div style="left:1115.5px;top:563px;width:7.3999999999999995px;height:8px;background:rgb(155,157,159);"></div>
<div style="left:1122.6px;top:555px;width:7.3999999999999995px;height:8px;background:rgb(223,224,223);"></div>
<div style="left:1122.6px;top:563px;width:7.3999999999999995px;height:8px;background:rgb(148,151,152);"></div>
<div style="left:1129.7px;top:555px;width:7.3999999999999995px;height:8px;background:rgb(243,240,241);"></div>
<div style="left:1129.7px;top:563px;width:7.3999999999999995px;height:8px;background:rgb(243,237,243);"></div>
<div style="left:1136.8px;top:555px;width:7.3999999999999995px;height:8px;background:rgb(243,238,240);"></div>
<div style="left:1136.8px;top:563px;width:7.3999999999999995px;height:8px;background:rgb(217,214,218);"></div>
<div style="left:1143.9px;top:555px;width:7.3999999999999995px;height:8px;background:rgb(233,232,232);"></div>
<div style="left:1143.9px;top:563px;width:7.3999999999999995px;height:8px;background:rgb(188,184,189);"></div>
<div style="left:1151.0px;top:555px;width:7.3999999999999995px;height:8px;background:rgb(236,232,234);"></div>
<div style="left:1151.0px;top:563px;width:7.3999999999999995px;height:8px;background:rgb(185,181,186);"></div>
<div style="left:1158.1px;top:555px;width:7.3999999999999995px;height:8px;background:rgb(243,240,241);"></div>
<div style="left:1158.1px;top:563px;width:7.3999999999999995px;height:8px;background:rgb(245,239,245);"></div>
<div style="left:1165.2px;top:555px;width:7.3999999999999995px;height:8px;background:rgb(232,229,230);"></div>
<div style="left:1165.2px;top:563px;width:7.3999999999999995px;height:8px;background:rgb(162,164,166);"></div>
<div style="left:1172.3px;top:555px;width:7.3999999999999995px;height:8px;background:rgb(215,220,217);"></div>
<div style="left:1172.3px;top:563px;width:7.3999999999999995px;height:8px;background:rgb(221,227,227);"></div>
<div style="left:1179.4px;top:555px;width:7.3999999999999995px;height:8px;background:rgb(226,222,224);"></div>
<div style="left:1179.4px;top:563px;width:7.3999999999999995px;height:8px;background:rgb(171,170,173);"></div>
<div style="left:1186.5px;top:555px;width:7.3999999999999995px;height:8px;background:rgb(235,239,237);"></div>
<div style="left:1186.5px;top:563px;width:7.3999999999999995px;height:8px;background:rgb(228,230,232);"></div>
<div style="left:1193.6px;top:555px;width:7.3999999999999995px;height:8px;background:rgb(244,239,241);"></div>
<div style="left:1193.6px;top:563px;width:7.3999999999999995px;height:8px;background:rgb(186,179,185);"></div>
<div style="left:1200.7px;top:555px;width:7.3999999999999995px;height:8px;background:rgb(213,218,215);"></div>
<div style="left:1200.7px;top:563px;width:7.3999999999999995px;height:8px;background:rgb(219,224,224);"></div>
<div style="left:1207.8px;top:555px;width:7.3999999999999995px;height:8px;background:rgb(239,240,239);"></div>
<div style="left:1207.8px;top:563px;width:7.3999999999999995px;height:8px;background:rgb(242,234,241);"></div>
<div style="left:1214.9px;top:555px;width:7.3999999999999995px;height:8px;background:rgb(226,231,228);"></div>
<div style="left:1214.9px;top:563px;width:7.3999999999999995px;height:8px;background:rgb(202,208,208);"></div>
<div style="left:1222.0px;top:555px;width:7.3999999999999995px;height:8px;background:rgb(222,227,224);"></div>
<div style="left:1222.0px;top:563px;width:7.3999999999999995px;height:8px;background:rgb(213,213,216);"></div>
<div style="left:1229.1px;top:555px;width:7.3999999999999995px;height:8px;background:rgb(243,240,241);"></div>
<div style="left:1229.1px;top:563px;width:7.3999999999999995px;height:8px;background:rgb(237,229,236);"></div>
<div style="left:1236.2px;top:555px;width:7.3999999999999995px;height:8px;background:rgb(230,233,231);"></div>
<div style="left:1236.2px;top:563px;width:7.3999999999999995px;height:8px;background:rgb(180,186,186);"></div>
<div style="left:1243.3px;top:555px;width:7.3999999999999995px;height:8px;background:rgb(245,240,242);"></div>
<div style="left:1243.3px;top:563px;width:7.3999999999999995px;height:8px;background:rgb(231,239,238);"></div>
<div style="left:1250.4px;top:555px;width:7.3999999999999995px;height:8px;background:rgb(217,214,215);"></div>
<div style="left:1250.4px;top:563px;width:7.3999999999999995px;height:8px;background:rgb(212,205,211);"></div>
<div style="left:1257.5px;top:555px;width:6.8px;height:8px;background:rgb(235,232,233);"></div>
<div style="left:1257.5px;top:563px;width:6.8px;height:8px;background:rgb(191,194,195);"></div>
<svg style="position:absolute;left:720.22px;top:586px" width="8" height="8"><path d="M8 0 L8 8 L0 8 Z" fill="#d9301c"/></svg>
<div class="t" style="left:734.72px;top:590.83px;font-family:'Liberation Mono', monospace;font-size:14.9px;color:#7e7e7e;font-weight:400;letter-spacing:-0.001px;transform:scaleY(1.1);transform-origin:0 3.97px">Invoke<span style="display:inline-block;width:17.88px;position:relative"><span style="position:absolute;left:6.9399999999999995px;top:-6px;width:4px;height:4px;border-radius:2px;background:#7e7e7e"></span></span>System.Reflection.<b>RuntimeMethodInfo</b>.Invoke(Object, BindingFlags, Binder, Object[], CultureInfo)</div>
<svg style="position:absolute;left:728.98px;top:613px" width="8" height="8"><path d="M8 0 L8 8 L0 8 Z" fill="#d9301c"/></svg>
<div class="t" style="left:743.48px;top:617.83px;font-family:'Liberation Mono', monospace;font-size:14.9px;color:#1a2330;font-weight:400;letter-spacing:-0.001px;transform:scaleY(1.1);transform-origin:0 3.97px">OnMessageReceived<span style="display:inline-block;width:17.88px;position:relative"><span style="position:absolute;left:6.9399999999999995px;top:-6px;width:4px;height:4px;border-radius:2px;background:#1a2330"></span></span>Octopus.EventBus.<b>OctopusEventBus</b>.OnMessageReceived(Object, MessageContext)</div>
<svg style="position:absolute;left:737.74px;top:640px" width="8" height="8"><path d="M8 0 L8 8 L0 8 Z" fill="#d9301c"/></svg>
<div class="t" style="left:752.24px;top:644.83px;font-family:'Liberation Mono', monospace;font-size:14.9px;color:#1f1f1f;font-weight:400;letter-spacing:-0.001px;transform:scaleY(1.1);transform-origin:0 3.97px">Listening<span style="display:inline-block;width:17.88px;position:relative"><span style="position:absolute;left:6.9399999999999995px;top:-6px;width:4px;height:4px;border-radius:2px;background:#1f1f1f"></span></span>Octopus.EventBus.Kafka.<b>KafkaMessageConsumer</b>.Listening(CancellationToken)</div>
<svg style="position:absolute;left:746.50px;top:667px" width="8" height="8"><path d="M8 0 L8 8 L0 8 Z" fill="#d9301c"/></svg>
<div class="t" style="left:761.0px;top:671.83px;font-family:'Liberation Mono', monospace;font-size:14.9px;color:#1f1f1f;font-weight:400;letter-spacing:-0.001px;transform:scaleY(1.1);transform-origin:0 3.97px">&lt;Start&gt;b__11_0<span style="display:inline-block;width:17.88px;position:relative"><span style="position:absolute;left:6.9399999999999995px;top:-6px;width:4px;height:4px;border-radius:2px;background:#1f1f1f"></span></span>Octopus.EventBus.<b>OctopusEventBus</b>.&lt;Start&gt;b__11_0()</div>
<svg style="position:absolute;left:755.26px;top:694px" width="8" height="8"><path d="M8 0 L8 8 L0 8 Z" fill="#d9301c"/></svg>
<svg style="position:absolute;left:774px;top:692px" width="17" height="13"><rect x="1" y="1" width="15" height="4" fill="none" stroke="#333" stroke-width="1.6"/><path d="M3.5 6.8 H13.5 L8.5 11.5 Z" fill="#333"/></svg>
<div class="t" style="left:793px;top:698.83px;font-family:'Liberation Mono', monospace;font-size:14.9px;color:#7e7e7e;font-weight:400;letter-spacing:-0.001px;transform:scaleY(1.1);transform-origin:0 3.97px">InnerInvoke<span style="display:inline-block;width:17.88px;position:relative"><span style="position:absolute;left:6.9399999999999995px;top:-6px;width:4px;height:4px;border-radius:2px;background:#7e7e7e"></span></span>System.Threading.Tasks.<b>Task</b>.InnerInvoke()</div>
<div class="t" style="left:779.2px;top:725.83px;font-family:'Liberation Mono', monospace;font-size:14.9px;color:#7e7e7e;font-weight:400;letter-spacing:-0.001px;transform:scaleY(1.1);transform-origin:0 3.97px">All Calls</div>
<div style="left:1890px;top:540px;width:15px;height:40px;background:#f4f4f4;"></div>
<svg style="position:absolute;left:0;top:0" width="1905" height="758"><path d="M874 634.6 L887 634 C905 633.5 920 632 935 631.6 L948.7 630 L989.6 629.8 C1000 630 1010 633.6 1017 633.6 L1202 633 C1220 632.6 1240 630.6 1254.6 630.6 L1360.8 629.2 L1375 627.8" fill="none" stroke="#f02828" stroke-width="3.4" stroke-linecap="round"/></svg>
<div style="left:1897px;top:607px;width:8px;height:110px;background:#c4c4c8;"></div>
<svg style="position:absolute;left:1896px;top:396px" width="9" height="8"><path d="M0.5 7.5 L4.5 1.5 L8.5 7.5 Z" fill="#7a7a7a"/></svg>
<svg style="position:absolute;left:1896px;top:723px" width="9" height="8"><path d="M0.5 0.5 L4.5 6.5 L8.5 0.5 Z" fill="#7a7a7a"/></svg>
<div style="left:472px;top:745px;width:1250px;height:10px;background:#c4c4c8;"></div>
<svg style="position:absolute;left:457px;top:745px" width="7" height="10"><path d="M6.5 0.5 L0.8 5 L6.5 9.5 Z" fill="#7a7a7a"/></svg>
<svg style="position:absolute;left:1876px;top:745px" width="7" height="10"><path d="M0.5 0.5 L6.2 5 L0.5 9.5 Z" fill="#7a7a7a"/></svg></body></html>
